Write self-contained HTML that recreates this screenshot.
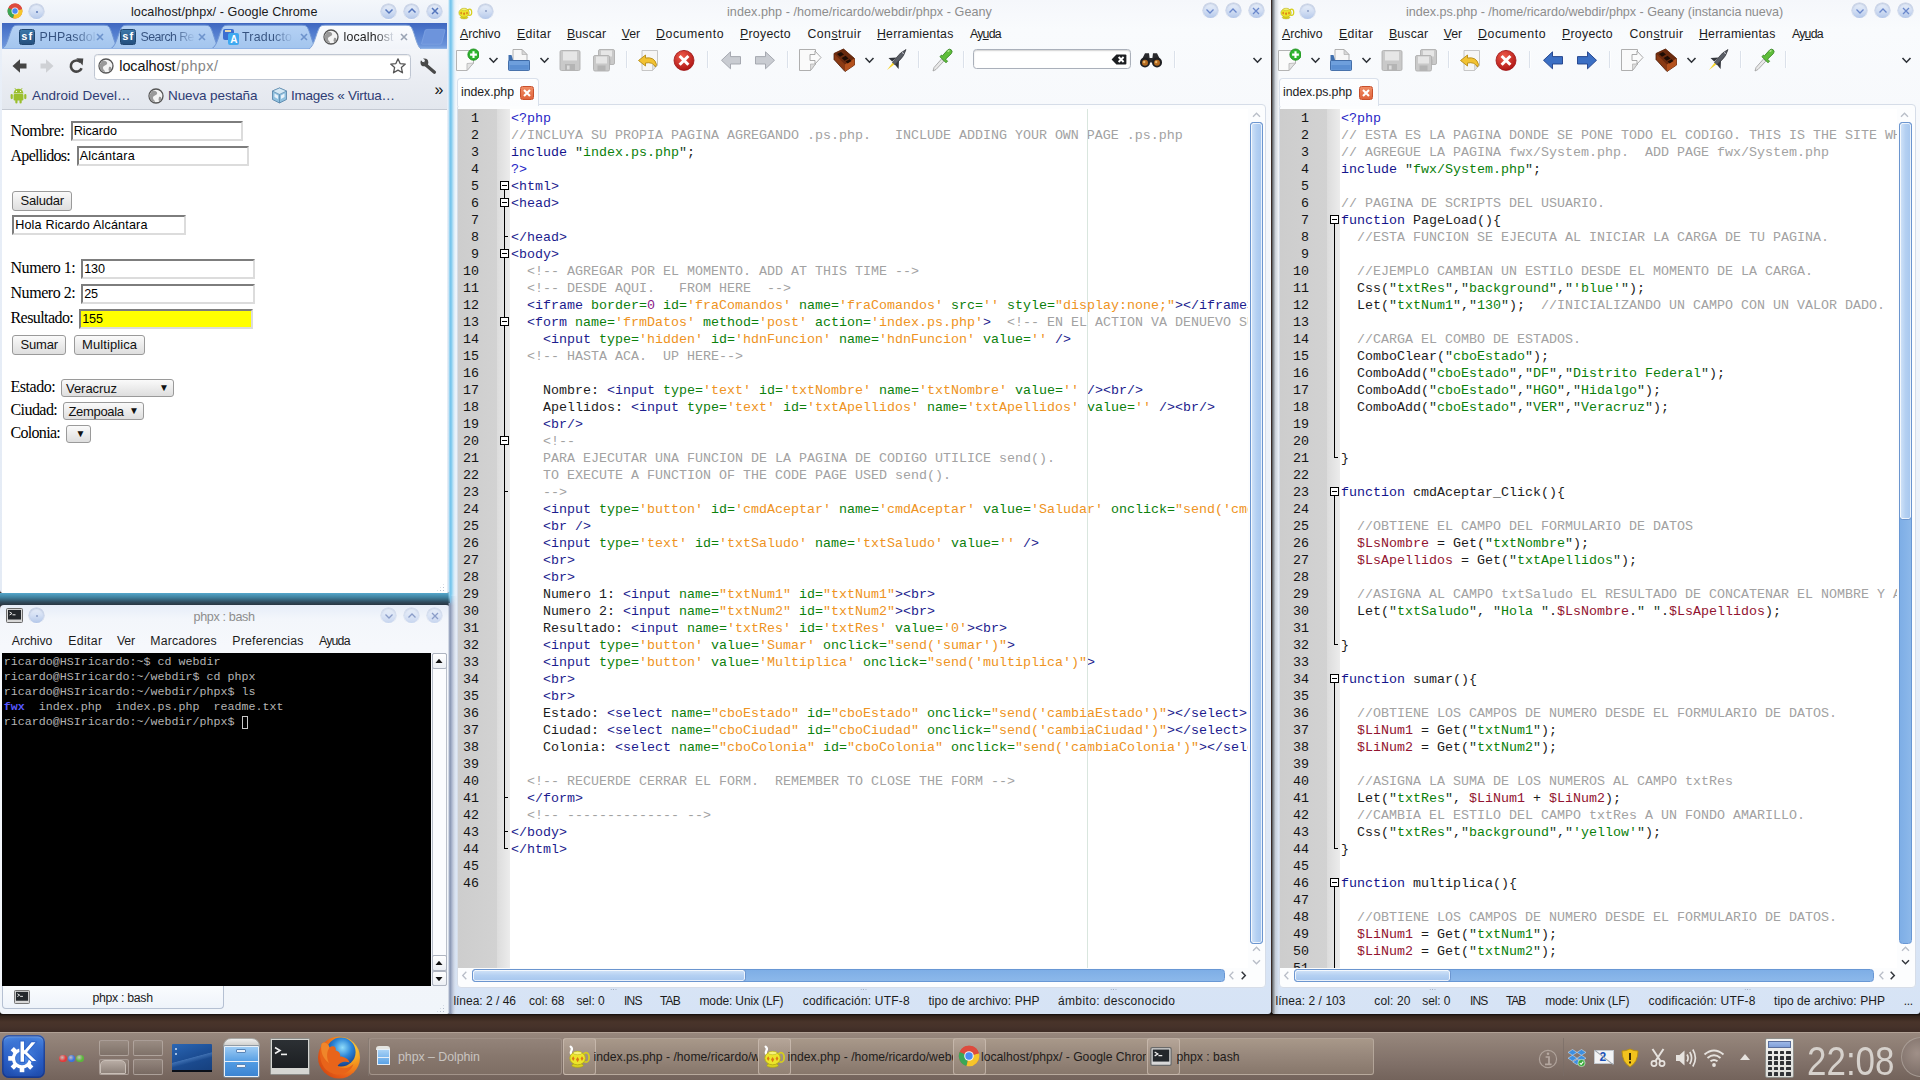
<!DOCTYPE html>
<html><head><meta charset="utf-8"><title>desktop</title>
<style>
*{box-sizing:border-box;margin:0;padding:0}
html,body{width:1920px;height:1080px;overflow:hidden}
body{position:relative;background:#3a2b27;font-family:"Liberation Sans",sans-serif;font-size:13px;color:#1a1a1a}
div,span.t,svg{position:absolute}
span.t{white-space:pre;display:block}
u{text-decoration:underline;text-underline-offset:1px}
.win{background:linear-gradient(#f5f7fb 0px,#f9fbfd 30px,#f7f9fc 110px,#e8eff8 60%,#d6e3f5 100%);overflow:hidden}
.code{font-family:"Liberation Mono",monospace;font-size:13.33px;line-height:17px;white-space:pre;color:#1c1c1c;overflow:hidden}
.code i{font-style:normal}
.code div{position:static;height:17px}
.c{color:#a2a2a2}.p{color:#2626c6}.k{color:#14148c}.s{color:#0b7f0b}.g{color:#1c1c8e}.a{color:#0c800c}.o{color:#ee9322}.v{color:#921430}.q{color:#22402a}.n{color:#8a1a8a}
.ln{font-family:"Liberation Mono",monospace;font-size:13.33px;line-height:17px;color:#141414;text-align:right;white-space:pre}
.ln div{position:static;height:17px}
.wb{border-radius:50%;background:linear-gradient(#e9eff9 0,#d6e1f4 45%,#b4c8ea 100%);box-shadow:0 1px 1px rgba(255,255,255,.95),0 0 0 .6px rgba(150,168,205,.55),inset 0 1px 1.5px rgba(110,130,175,.35)}
.sep{width:1px;background:#d4dbe6;border-right:1px solid #fbfcfe}
.btn{border:1px solid #9a9a9a;border-radius:3px;background:linear-gradient(#fafafa,#dedede);font-size:13px;color:#111;text-align:center;line-height:18px}
.inp{border:2px solid;border-color:#7d7d7d #dcdcdc #dcdcdc #7d7d7d;background:#fff}
.sel{border:1px solid #9a9a9a;border-radius:3px;background:linear-gradient(#fafafa,#dedede)}
.term{font-family:"Liberation Mono",monospace;font-size:11.67px;line-height:15px;white-space:pre;color:#b4b4b4}
.term div{position:static;height:15px}
</style></head><body>
<div style="left:0.0px;top:593.0px;width:452.0px;height:13.0px;background:linear-gradient(#55a7cb 0,#3f7f9c 35%,#2f4a5c 70%,#262e38 100%)"></div>
<div style="left:0.0px;top:1012.0px;width:1920.0px;height:22.0px;background:linear-gradient(#120c0a 0,#120c0a 2px,#33241d 4px,#49342a 10px,#46322a 15px,#3b2a24 100%)"></div>
<div class="win" style="left:0;top:0;width:450px;height:593px;background:linear-gradient(#f4f7fb,#e9eff8 24px,#e4ebf5 100%);border-radius:0 0 3px 3px">
<svg style="left:7px;top:3px" width="16" height="16" viewBox="0 0 16 16">
<circle cx="8" cy="8" r="7.4" fill="#dd4b3e"/>
<path d="M8 8 L1.2 5 A7.4 7.4 0 0 0 6.2 15.2 Z" fill="#3aa757"/>
<path d="M8 8 L6.2 15.2 A7.4 7.4 0 0 0 15.2 6 Z" fill="#f6c52b"/>
<path d="M8 8 L1.6 4.3 A7.4 7.4 0 0 1 15.2 6 Z" fill="#dd4b3e"/>
<circle cx="8" cy="8" r="3.5" fill="#f3f3f3"/><circle cx="8" cy="8" r="2.7" fill="#4a8af4"/></svg>
<div class="wb" style="left:29.0px;top:4.0px;width:15.0px;height:15.0px;"></div>
<div style="left:35.5px;top:10.5px;width:2.0px;height:2.0px;background:#5a78b8;border-radius:50%"></div>
<span class="t" style="left:131.0px;top:4.0px;font-size:12.60px;line-height:16px;color:#1a1a1a;letter-spacing:0.077px;">localhost/phpx/ - Google Chrome</span>
<div class="wb" style="left:381.0px;top:3.5px;width:15.0px;height:15.0px;"></div>
<svg style="left:380.5px;top:3px" width="16" height="16" viewBox="-8 -8 16 16"><path d="M-3.5,-1.5 L0,2 L3.5,-1.5" fill="none" stroke="#5576bd" stroke-width="1.5"/></svg>
<div class="wb" style="left:404.0px;top:3.5px;width:15.0px;height:15.0px;"></div>
<svg style="left:403.5px;top:3px" width="16" height="16" viewBox="-8 -8 16 16"><path d="M-3.5,1.5 L0,-2 L3.5,1.5" fill="none" stroke="#5576bd" stroke-width="1.5"/></svg>
<div class="wb" style="left:427.0px;top:3.5px;width:15.0px;height:15.0px;"></div>
<svg style="left:426.5px;top:3px" width="16" height="16" viewBox="-8 -8 16 16"><path d="M-3,-3 L3,3 M3,-3 L-3,3" fill="none" stroke="#5576bd" stroke-width="1.5"/></svg>
<div style="left:2.0px;top:23.0px;width:445.0px;height:26.0px;background:linear-gradient(#3f66bf 0,#4d78cc 30%,#6a93da 85%,#86ade6 100%)"></div>
<svg style="left:2px;top:23px" width="445" height="26" viewBox="0 0 445 26">
<defs><linearGradient id="tg" x1="0" y1="0" x2="0" y2="1"><stop offset="0" stop-color="#b5d1f4"/><stop offset="1" stop-color="#a3c5ee"/></linearGradient>
<linearGradient id="ta" x1="0" y1="0" x2="0" y2="1"><stop offset="0" stop-color="#fafcfe"/><stop offset="1" stop-color="#f1f4f9"/></linearGradient></defs>
<path d="M0.5 25.5 C6 23 8 5 12 3 Q13 2.2 16 2.2 L102 2.2 Q105 2.2 106 3 C110 5 112 23 117 25.5 Z" fill="url(#tg)" stroke="#6f95d4" stroke-width="1"/>
<path d="M109 25.5 C115 23 117 5 121 3 Q122 2.2 125 2.2 L203 2.2 Q206 2.2 207 3 C211 5 213 23 218 25.5 Z" fill="url(#tg)" stroke="#6f95d4" stroke-width="1"/>
<path d="M210 25.5 C216 23 218 5 222 3 Q223 2.2 226 2.2 L300 2.2 Q303 2.2 304 3 C308 5 310 23 315 25.5 Z" fill="url(#tg)" stroke="#6f95d4" stroke-width="1"/>
<path d="M419.5 20.8 L423 7.6 Q423.4 6.4 424.8 6.4 L441.6 6.4 Q443.4 6.4 443 7.8 L439.6 20 Q439.2 21.2 437.8 21.2 L420.6 21.2 Q419.2 21.2 419.5 20.8 Z" fill="#6d94dc" stroke="#86a9e6" stroke-width="0.6"/>
<rect x="0" y="25" width="445" height="1.2" fill="#8fb3e6"/>
<path d="M307 26 C313 23 315 5 319 3 Q320 2.2 323 2.2 L404 2.2 Q407 2.2 408 3 C412 5 414 23 419 26" fill="url(#ta)" stroke="#86a6d8" stroke-width="1"/>
</svg>
<div style="left:19.0px;top:29.0px;width:16.0px;height:16.0px;background:linear-gradient(#3b77a8,#244f7e);border-radius:2.5px;border:1px solid #1f4670"></div>
<span class="t" style="left:21.2px;top:29.3px;font-size:11.00px;line-height:14px;color:#fff;font-family:'Liberation Sans',sans-serif;font-weight:bold;letter-spacing:1.219px;">sf</span>
<div style="left:120.0px;top:29.0px;width:16.0px;height:16.0px;background:linear-gradient(#3b77a8,#244f7e);border-radius:2.5px;border:1px solid #1f4670"></div>
<span class="t" style="left:122.2px;top:29.3px;font-size:11.00px;line-height:14px;color:#fff;font-family:'Liberation Sans',sans-serif;font-weight:bold;letter-spacing:1.219px;">sf</span>
<div style="left:223.0px;top:29.0px;width:11.0px;height:11.0px;background:#3c6fd0;border-radius:2px"></div>
<div style="left:228.0px;top:33.0px;width:11.0px;height:12.0px;background:#3fa9f0;border-radius:2px"></div>
<span class="t" style="left:230.2px;top:33.0px;font-size:10.00px;line-height:13px;color:#fff;font-family:'Liberation Sans',sans-serif;font-weight:bold;">A</span>
<div style="left:225.0px;top:30.0px;width:6.0px;height:2.0px;background:#e8d9b0"></div>
<span class="t" style="left:39.5px;top:29.0px;font-size:12.40px;line-height:16px;color:#35527f;letter-spacing:0.123px;background:linear-gradient(90deg,#35527f 0,#35527f 62%,rgba(120,150,200,.15) 100%);-webkit-background-clip:text;background-clip:text;color:transparent;">PHPasdol</span>
<span class="t" style="left:140.5px;top:29.0px;font-size:12.40px;line-height:16px;color:#35527f;letter-spacing:-0.573px;background:linear-gradient(90deg,#35527f 0,#35527f 62%,rgba(120,150,200,.15) 100%);-webkit-background-clip:text;background-clip:text;color:transparent;">Search Re</span>
<span class="t" style="left:242.0px;top:29.0px;font-size:12.40px;line-height:16px;color:#35527f;letter-spacing:0.218px;background:linear-gradient(90deg,#35527f 0,#35527f 62%,rgba(120,150,200,.15) 100%);-webkit-background-clip:text;background-clip:text;color:transparent;">Traducto</span>
<span class="t" style="left:343.5px;top:29.0px;font-size:12.40px;line-height:16px;color:#222;letter-spacing:0.132px;background:linear-gradient(90deg,#1d1d1d 0,#1d1d1d 62%,rgba(120,150,200,.15) 100%);-webkit-background-clip:text;background-clip:text;color:transparent;">localhost</span>
<svg style="left:95.0px;top:32px" width="10" height="10" viewBox="-5 -5 10 10"><path d="M-3,-3 L3,3 M3,-3 L-3,3" stroke="#6d93cc" stroke-width="1.6" fill="none"/></svg>
<svg style="left:197.0px;top:32px" width="10" height="10" viewBox="-5 -5 10 10"><path d="M-3,-3 L3,3 M3,-3 L-3,3" stroke="#6d93cc" stroke-width="1.6" fill="none"/></svg>
<svg style="left:298.5px;top:32px" width="10" height="10" viewBox="-5 -5 10 10"><path d="M-3,-3 L3,3 M3,-3 L-3,3" stroke="#6d93cc" stroke-width="1.6" fill="none"/></svg>
<svg style="left:399.0px;top:32px" width="10" height="10" viewBox="-5 -5 10 10"><path d="M-3,-3 L3,3 M3,-3 L-3,3" stroke="#9aa4b4" stroke-width="1.6" fill="none"/></svg>
<svg style="left:323.0px;top:29.0px" width="16" height="16" viewBox="-8 -8 16 16"><circle r="7" fill="#f4f4f4" stroke="#555" stroke-width="1.3"/><path d="M-4,-5 C-1,-6 2,-4 1,-2 C0,0 -3,-1 -3,2 C-3,4 -1,4 -1,6 C-4,6 -7,3 -6.5,-1 Z M3,1 C5,0 6,2 5,4 C4,5.5 2.5,5 2.5,3.5 Z" fill="#9a9a9a"/></svg>
<div style="left:2.0px;top:49.0px;width:445.0px;height:33.0px;background:linear-gradient(#f3f5f9,#e9ecf2)"></div>
<svg style="left:10px;top:56px" width="80" height="20" viewBox="0 0 80 20">
<path d="M2.5 10 L10 3.2 L10 7.6 L16.5 7.6 L16.5 12.4 L10 12.4 L10 16.8 Z" fill="#454545"/>
<path d="M43.5 10 L36 3.2 L36 7.6 L30.5 7.6 L30.5 12.4 L36 12.4 L36 16.8 Z" fill="#cfd1d5"/>
<path d="M70.5 6.2 A5.6 5.6 0 1 0 71.6 12.2" fill="none" stroke="#454545" stroke-width="2.6"/>
<path d="M66.3 2.2 L73.3 2.6 L72.6 9.4 Z" fill="#454545"/></svg>
<div style="left:94.0px;top:54.0px;width:317.0px;height:25.5px;background:#fff;border:1px solid #bfc6d2;border-radius:3.5px;box-shadow:inset 0 1px 1px rgba(0,0,0,.08)"></div>
<svg style="left:98.0px;top:58.0px" width="16" height="16" viewBox="-8 -8 16 16"><circle r="7" fill="#f4f4f4" stroke="#555" stroke-width="1.3"/><path d="M-4,-5 C-1,-6 2,-4 1,-2 C0,0 -3,-1 -3,2 C-3,4 -1,4 -1,6 C-4,6 -7,3 -6.5,-1 Z M3,1 C5,0 6,2 5,4 C4,5.5 2.5,5 2.5,3.5 Z" fill="#9a9a9a"/></svg>
<span class="t" style="left:119.3px;top:57.0px;font-size:14.40px;line-height:19px;color:#111;letter-spacing:-0.067px;">localhost</span>
<span class="t" style="left:176.5px;top:57.0px;font-size:14.40px;line-height:19px;color:#868686;letter-spacing:0.454px;">/phpx/</span>
<svg style="left:389px;top:57px" width="18" height="18" viewBox="-9 -9 18 18"><path d="M0,-7.2 L2.1,-2.4 L7.3,-1.9 L3.4,1.6 L4.5,6.8 L0,4.1 L-4.5,6.8 L-3.4,1.6 L-7.3,-1.9 L-2.1,-2.4 Z" fill="#fdfdfd" stroke="#555" stroke-width="1.3" stroke-linejoin="round"/></svg>
<svg style="left:419px;top:56px" width="20" height="20" viewBox="0 0 20 20"><path d="M5.2 7.6 L15.4 16.2" stroke="#494949" stroke-width="3.3" stroke-linecap="round"/><circle cx="5.4" cy="6.4" r="3.9" fill="#494949"/><path d="M5.4 6.4 L0.6 3.6 L3.4 0.2 Z" fill="#eff2f7"/><circle cx="4.3" cy="4.6" r="1.5" fill="#eff2f7"/></svg>
<div style="left:2.0px;top:82.0px;width:445.0px;height:28.0px;background:linear-gradient(#e9ecf2,#e3e7ee);border-bottom:1px solid #c4c9d2"></div>
<svg style="left:10px;top:87px" width="17" height="17" viewBox="0 0 17 17"><g fill="#9bbf2d">
<path d="M3.6 6.4 A4.9 4.6 0 0 1 13.4 6.4 Z"/><rect x="3.6" y="7" width="9.8" height="6.6" rx="1"/>
<rect x="0.6" y="7" width="2.2" height="5.2" rx="1.1"/><rect x="14.2" y="7" width="2.2" height="5.2" rx="1.1"/>
<rect x="5.3" y="12.5" width="2.2" height="4" rx="1.1"/><rect x="9.5" y="12.5" width="2.2" height="4" rx="1.1"/>
<path d="M4.8 1 L6.2 3.2 M12.2 1 L10.8 3.2" stroke="#9bbf2d" stroke-width="0.8"/></g>
<circle cx="6.4" cy="4.4" r=".6" fill="#fff"/><circle cx="10.6" cy="4.4" r=".6" fill="#fff"/></svg>
<span class="t" style="left:32.0px;top:86.5px;font-size:13.50px;line-height:18px;color:#2e3c74;letter-spacing:0.015px;">Android Devel…</span>
<svg style="left:147.6px;top:87.5px" width="16" height="16" viewBox="-8 -8 16 16"><circle r="7" fill="#f4f4f4" stroke="#555" stroke-width="1.3"/><path d="M-4,-5 C-1,-6 2,-4 1,-2 C0,0 -3,-1 -3,2 C-3,4 -1,4 -1,6 C-4,6 -7,3 -6.5,-1 Z M3,1 C5,0 6,2 5,4 C4,5.5 2.5,5 2.5,3.5 Z" fill="#9a9a9a"/></svg>
<span class="t" style="left:168.0px;top:86.5px;font-size:13.50px;line-height:18px;color:#2e3c74;letter-spacing:-0.110px;">Nueva pestaña</span>
<svg style="left:271px;top:87px" width="17" height="17" viewBox="0 0 17 17">
<path d="M8.5 1 L15.5 4 L15.5 12.5 L8.5 16 L1.5 12.5 L1.5 4 Z" fill="#8fc0de" stroke="#4f7fa6" stroke-width=".8"/>
<path d="M8.5 1 L15.5 4 L8.5 7.4 L1.5 4 Z" fill="#d4e8f4" stroke="#4f7fa6" stroke-width=".6"/>
<path d="M8.5 7.4 L8.5 16" stroke="#4f7fa6" stroke-width=".7"/><path d="M3.5 6.5 L7 8.5 L7 12 L3.5 10 Z M10 8.5 L13.5 6.5 L13.5 10 L10 12 Z" fill="#e8f2fa"/></svg>
<span class="t" style="left:291.0px;top:86.5px;font-size:13.50px;line-height:18px;color:#2e3c74;letter-spacing:-0.254px;">Images « Virtua…</span>
<span class="t" style="left:434.5px;top:79.0px;font-size:16.00px;line-height:21px;color:#111;">»</span>
<div style="left:2.0px;top:110.0px;width:445.0px;height:483.0px;background:#fff"></div>
<span class="t" style="left:10.5px;top:119.7px;font-size:16.00px;line-height:21px;color:#000;font-family:'Liberation Serif',serif;letter-spacing:-0.429px;">Nombre:</span>
<div class="inp" style="left:70.5px;top:121.0px;width:172.5px;height:20.0px;background:#fff"></div>
<span class="t" style="left:73.7px;top:123.3px;font-size:12.60px;line-height:16px;color:#000;letter-spacing:-0.020px;">Ricardo</span>
<span class="t" style="left:10.5px;top:144.7px;font-size:16.00px;line-height:21px;color:#000;font-family:'Liberation Serif',serif;letter-spacing:-0.707px;">Apellidos:</span>
<div class="inp" style="left:76.5px;top:146.0px;width:172.5px;height:20.0px;background:#fff"></div>
<span class="t" style="left:79.7px;top:148.3px;font-size:12.60px;line-height:16px;color:#000;letter-spacing:0.221px;">Alcántara</span>
<div class="btn" style="left:12.0px;top:190.5px;width:60.0px;height:20.0px;"></div>
<span class="t" style="left:20.5px;top:192.3px;font-size:13.00px;line-height:17px;color:#111;letter-spacing:-0.218px;">Saludar</span>
<div class="inp" style="left:12.0px;top:215.0px;width:173.5px;height:20.0px;background:#fff"></div>
<span class="t" style="left:15.2px;top:217.3px;font-size:12.60px;line-height:16px;color:#000;letter-spacing:0.163px;">Hola Ricardo Alcántara</span>
<span class="t" style="left:10.5px;top:257.2px;font-size:16.00px;line-height:21px;color:#000;font-family:'Liberation Serif',serif;letter-spacing:-0.447px;">Numero 1:</span>
<div class="inp" style="left:81.0px;top:259.0px;width:173.5px;height:20.0px;background:#fff"></div>
<span class="t" style="left:84.2px;top:261.3px;font-size:12.60px;line-height:16px;color:#000;letter-spacing:-0.158px;">130</span>
<span class="t" style="left:10.5px;top:282.2px;font-size:16.00px;line-height:21px;color:#000;font-family:'Liberation Serif',serif;letter-spacing:-0.447px;">Numero 2:</span>
<div class="inp" style="left:81.0px;top:284.0px;width:173.5px;height:20.0px;background:#fff"></div>
<span class="t" style="left:84.2px;top:286.3px;font-size:12.60px;line-height:16px;color:#000;letter-spacing:-0.210px;">25</span>
<span class="t" style="left:10.5px;top:307.2px;font-size:16.00px;line-height:21px;color:#000;font-family:'Liberation Serif',serif;letter-spacing:-0.571px;">Resultado:</span>
<div class="inp" style="left:79.0px;top:309.0px;width:173.5px;height:20.0px;background:#ffff00"></div>
<span class="t" style="left:82.2px;top:311.3px;font-size:12.60px;line-height:16px;color:#000;letter-spacing:-0.158px;">155</span>
<div class="btn" style="left:12.0px;top:334.5px;width:54.0px;height:20.0px;"></div>
<span class="t" style="left:20.5px;top:336.3px;font-size:13.00px;line-height:17px;color:#111;letter-spacing:-0.198px;">Sumar</span>
<div class="btn" style="left:74.0px;top:334.5px;width:71.0px;height:20.0px;"></div>
<span class="t" style="left:82.0px;top:336.3px;font-size:13.00px;line-height:17px;color:#111;letter-spacing:0.090px;">Multiplica</span>
<span class="t" style="left:10.5px;top:375.7px;font-size:16.00px;line-height:21px;color:#000;font-family:'Liberation Serif',serif;letter-spacing:-0.449px;">Estado:</span>
<div class="sel" style="left:61.0px;top:378.5px;width:113.0px;height:18.5px;"></div>
<span class="t" style="left:66.0px;top:379.5px;font-size:13.00px;line-height:17px;color:#111;letter-spacing:-0.043px;">Veracruz</span>
<span class="t" style="left:159.0px;top:381.0px;font-size:10.00px;line-height:13px;color:#111;">▼</span>
<span class="t" style="left:10.5px;top:398.7px;font-size:16.00px;line-height:21px;color:#000;font-family:'Liberation Serif',serif;letter-spacing:-0.561px;">Ciudad:</span>
<div class="sel" style="left:63.0px;top:401.5px;width:81.0px;height:18.5px;"></div>
<span class="t" style="left:68.5px;top:402.5px;font-size:13.00px;line-height:17px;color:#111;letter-spacing:-0.330px;">Zempoala</span>
<span class="t" style="left:129.0px;top:404.0px;font-size:10.00px;line-height:13px;color:#111;">▼</span>
<span class="t" style="left:10.5px;top:421.7px;font-size:16.00px;line-height:21px;color:#000;font-family:'Liberation Serif',serif;letter-spacing:-0.687px;">Colonia:</span>
<div class="sel" style="left:66.0px;top:424.5px;width:25.0px;height:18.5px;"></div>
<span class="t" style="left:75.5px;top:427.0px;font-size:10.00px;line-height:13px;color:#111;">▼</span>
<div style="left:436.0px;top:583.0px;width:9.0px;height:9.0px;background:radial-gradient(circle,#9aa4b8 0.8px,transparent 1px) 0 0/3px 3px;opacity:.7;clip-path:polygon(100% 0,100% 100%,0 100%)"></div>
</div>
<div class="win" style="left:0;top:605px;width:450px;height:409px;background:linear-gradient(#e6edf8 0,#f3f6fb 14px,#f6f8fc 40px,#f1f5fa 100%);border-radius:4px 4px 3px 3px">
<svg style="left:6.0px;top:3.0px" width="17" height="15" viewBox="0 0 17 15"><rect x=".5" y=".5" width="16" height="14" rx="1" fill="#d8d8d8" stroke="#6a6a6a"/><rect x="2" y="2" width="13" height="9.5" fill="#23272b"/><path d="M3.5 4 L6 5.5 L3.5 7" fill="none" stroke="#eee" stroke-width="1"/><rect x="6.5" y="6.3" width="3" height="1" fill="#eee"/></svg>
<div class="wb" style="left:29.0px;top:3.0px;width:15.0px;height:15.0px;"></div>
<div style="left:35.5px;top:9.5px;width:2.0px;height:2.0px;background:#8a9cc4;border-radius:50%"></div>
<span class="t" style="left:193.5px;top:4.0px;font-size:12.60px;line-height:16px;color:#8d8d8d;letter-spacing:-0.365px;">phpx : bash</span>
<div class="wb" style="left:381.0px;top:3.0px;width:15.0px;height:15.0px;opacity:.7"></div>
<svg style="left:380.5px;top:2.5px" width="16" height="16" viewBox="-8 -8 16 16"><path d="M-3.5,-1.5 L0,2 L3.5,-1.5" fill="none" stroke="#8b9dc8" stroke-width="1.3"/></svg>
<div class="wb" style="left:404.0px;top:3.0px;width:15.0px;height:15.0px;opacity:.7"></div>
<svg style="left:403.5px;top:2.5px" width="16" height="16" viewBox="-8 -8 16 16"><path d="M-3.5,1.5 L0,-2 L3.5,1.5" fill="none" stroke="#8b9dc8" stroke-width="1.3"/></svg>
<div class="wb" style="left:427.0px;top:3.0px;width:15.0px;height:15.0px;opacity:.7"></div>
<svg style="left:426.5px;top:2.5px" width="16" height="16" viewBox="-8 -8 16 16"><path d="M-3,-3 L3,3 M3,-3 L-3,3" fill="none" stroke="#8b9dc8" stroke-width="1.3"/></svg>
<span class="t" style="left:11.8px;top:27.8px;font-size:12.30px;line-height:16px;color:#1c1c1c;letter-spacing:-0.086px;">Archivo</span>
<span class="t" style="left:68.3px;top:27.8px;font-size:12.30px;line-height:16px;color:#1c1c1c;letter-spacing:0.313px;">Editar</span>
<span class="t" style="left:117.0px;top:27.8px;font-size:12.30px;line-height:16px;color:#1c1c1c;letter-spacing:-0.232px;">Ver</span>
<span class="t" style="left:150.3px;top:27.8px;font-size:12.30px;line-height:16px;color:#1c1c1c;letter-spacing:0.151px;">Marcadores</span>
<span class="t" style="left:232.3px;top:27.8px;font-size:12.30px;line-height:16px;color:#1c1c1c;letter-spacing:0.195px;">Preferencias</span>
<span class="t" style="left:319.0px;top:27.8px;font-size:12.30px;line-height:16px;color:#1c1c1c;letter-spacing:-0.789px;">Ayuda</span>
<div style="left:2.0px;top:48.0px;width:429.0px;height:333.0px;background:#000"></div>
<div class="term" style="left:3.7px;top:50px;width:426px;height:330px"><div>ricardo@HSIricardo:~$ cd webdir</div><div>ricardo@HSIricardo:~/webdir$ cd phpx</div><div>ricardo@HSIricardo:~/webdir/phpx$ ls</div><div><b style="color:#5858ff">fwx</b>  index.php  index.ps.php  readme.txt</div><div>ricardo@HSIricardo:~/webdir/phpx$ </div></div>
<div style="left:241.5px;top:110.5px;width:6.5px;height:13.5px;border:1px solid #c8c8c8"></div>
<div style="left:431.5px;top:48.0px;width:15.0px;height:333.0px;background:#fbfcfe;border:1px solid #b9bfca;border-radius:2px"></div>
<div style="left:431.5px;top:48.0px;width:15.0px;height:15.5px;background:linear-gradient(#ffffff,#eceff4);border:1px solid #aeb4c0;border-radius:2px"></div>
<svg style="left:433px;top:51.0px" width="12" height="10" viewBox="-6 -5 12 10"><path d="M-3.5,2 L0,-2.2 L3.5,2 Z" fill="#111"/></svg>
<div style="left:431.5px;top:350.0px;width:15.0px;height:15.5px;background:linear-gradient(#ffffff,#eceff4);border:1px solid #aeb4c0;border-radius:2px"></div>
<svg style="left:433px;top:353.0px" width="12" height="10" viewBox="-6 -5 12 10"><path d="M-3.5,2 L0,-2.2 L3.5,2 Z" fill="#111"/></svg>
<div style="left:431.5px;top:365.5px;width:15.0px;height:15.5px;background:linear-gradient(#ffffff,#eceff4);border:1px solid #aeb4c0;border-radius:2px"></div>
<svg style="left:433px;top:368.5px" width="12" height="10" viewBox="-6 -5 12 10"><path d="M-3.5,-2 L0,2.2 L3.5,-2 Z" fill="#111"/></svg>
<div style="left:2.0px;top:381.0px;width:222.0px;height:23.0px;background:linear-gradient(#fafcfe,#eef3fa);border:1px solid #b5c0d2;border-top:none;border-radius:0 0 4px 4px"></div>
<svg style="left:14.0px;top:385.0px" width="16" height="14" viewBox="0 0 17 15"><rect x=".5" y=".5" width="16" height="14" rx="1" fill="#d8d8d8" stroke="#6a6a6a"/><rect x="2" y="2" width="13" height="9.5" fill="#23272b"/><path d="M3.5 4 L6 5.5 L3.5 7" fill="none" stroke="#eee" stroke-width="1"/><rect x="6.5" y="6.3" width="3" height="1" fill="#eee"/></svg>
<span class="t" style="left:92.5px;top:385.0px;font-size:12.30px;line-height:16px;color:#1c1c1c;letter-spacing:-0.310px;">phpx : bash</span>
<div style="left:436.0px;top:399.0px;width:9.0px;height:9.0px;background:radial-gradient(circle,#9aa4b8 0.8px,transparent 1px) 0 0/3px 3px;opacity:.7;clip-path:polygon(100% 0,100% 100%,0 100%)"></div>
</div>
<div class="win" style="left:450.0px;top:0;width:820.5px;height:1014px;border-radius:0 0 3px 3px">
<div style="left:0.0px;top:596.0px;width:8.0px;height:418.0px;background:linear-gradient(90deg,#8d9ab6 0,#a3afc8 1.5px,#c3ccdd 3.2px,rgba(214,222,235,.6) 5px,rgba(236,241,248,0) 7px)"></div>
<div style="left:0.0px;top:0.0px;width:8.0px;height:606.0px;background:linear-gradient(90deg,#74c3ec 0,#86cdef 1.5px,#bfe2f6 3.2px,rgba(226,240,250,.6) 5px,rgba(240,246,252,0) 7px);-webkit-mask-image:linear-gradient(#000 0,#000 594px,transparent 606px);mask-image:linear-gradient(#000 0,#000 594px,transparent 606px)"></div>
<svg style="left:6.5px;top:3.5px" width="16" height="16" viewBox="0 0 24 24">
<path d="M3.6 1.6 Q6 3.4 4.2 6 Q3 8 5.2 9.8" fill="none" stroke="#fdfdfd" stroke-width="2.2" stroke-linecap="round"/>
<ellipse cx="19" cy="12.4" rx="3.1" ry="4.8" fill="none" stroke="#d6cf1c" stroke-width="1.8"/>
<ellipse cx="10.6" cy="20.4" rx="5.8" ry="2" fill="#d9d21e" stroke="#a8a012" stroke-width=".6"/>
<ellipse cx="10.6" cy="13.2" rx="7.8" ry="6.6" fill="#ece52c" stroke="#b0a814" stroke-width=".8"/>
<ellipse cx="10.6" cy="8" rx="4.4" ry="1.7" fill="#f6f27a" stroke="#b0a814" stroke-width=".5"/>
<path d="M6.2 11.2 L7.6 13.6 L6.2 16 L4.8 13.6 Z M10.6 12 L12.2 14.6 L10.6 17.2 L9 14.6 Z M15 11.2 L16.4 13.6 L15 16 L13.6 13.6 Z" fill="#dd7a16"/>
</svg>
<div class="wb" style="left:28.0px;top:3.5px;width:15.0px;height:15.0px;"></div>
<div style="left:34.5px;top:10.0px;width:2.0px;height:2.0px;background:#8a9cc4;border-radius:50%"></div>
<span class="t" style="left:277.0px;top:4.0px;font-size:12.60px;line-height:16px;color:#8d8d8d;letter-spacing:0.054px;">index.php - /home/ricardo/webdir/phpx - Geany</span>
<div class="wb" style="left:752.5px;top:3.0px;width:15.0px;height:15.0px;"></div>
<svg style="left:752.0px;top:2.5px" width="16" height="16" viewBox="-8 -8 16 16"><path d="M-3.5,-1.5 L0,2 L3.5,-1.5" fill="none" stroke="#6a88cc" stroke-width="1.3"/></svg>
<div class="wb" style="left:775.5px;top:3.0px;width:15.0px;height:15.0px;"></div>
<svg style="left:775.0px;top:2.5px" width="16" height="16" viewBox="-8 -8 16 16"><path d="M-3.5,1.5 L0,-2 L3.5,1.5" fill="none" stroke="#6a88cc" stroke-width="1.3"/></svg>
<div class="wb" style="left:798.5px;top:3.0px;width:15.0px;height:15.0px;"></div>
<svg style="left:798.0px;top:2.5px" width="16" height="16" viewBox="-8 -8 16 16"><path d="M-3,-3 L3,3 M3,-3 L-3,3" fill="none" stroke="#6a88cc" stroke-width="1.3"/></svg>
<span class="t" style="left:10.0px;top:26.3px;font-size:12.30px;line-height:16px;color:#1c1c1c;letter-spacing:-0.086px;"><u>A</u>rchivo</span>
<span class="t" style="left:67.0px;top:26.3px;font-size:12.30px;line-height:16px;color:#1c1c1c;letter-spacing:0.373px;"><u>E</u>ditar</span>
<span class="t" style="left:117.0px;top:26.3px;font-size:12.30px;line-height:16px;color:#1c1c1c;letter-spacing:0.143px;"><u>B</u>uscar</span>
<span class="t" style="left:171.7px;top:26.3px;font-size:12.30px;line-height:16px;color:#1c1c1c;letter-spacing:-0.082px;"><u>V</u>er</span>
<span class="t" style="left:206.0px;top:26.3px;font-size:12.30px;line-height:16px;color:#1c1c1c;letter-spacing:0.575px;"><u>D</u>ocumento</span>
<span class="t" style="left:290.0px;top:26.3px;font-size:12.30px;line-height:16px;color:#1c1c1c;letter-spacing:0.280px;"><u>P</u>royecto</span>
<span class="t" style="left:357.5px;top:26.3px;font-size:12.30px;line-height:16px;color:#1c1c1c;letter-spacing:0.450px;">Con<u>s</u>truir</span>
<span class="t" style="left:427.0px;top:26.3px;font-size:12.30px;line-height:16px;color:#1c1c1c;letter-spacing:0.225px;"><u>H</u>erramientas</span>
<span class="t" style="left:520.0px;top:26.3px;font-size:12.30px;line-height:16px;color:#1c1c1c;letter-spacing:-0.789px;">Ay<u>u</u>da</span>
<svg style="left:4.5px;top:48.0px" width="24" height="24" viewBox="0 0 24 24"><g transform="translate(-2,0)"><path d="M3.5 2.5 L20.5 2.5 L20.5 15 L14 22.5 L3.5 22.5 Z" fill="#fbfbfb" stroke="#b4b4b4" stroke-width="1"/><path d="M20.5 15 L14 15.5 L14 22.5 Z" fill="#e4e4e4" stroke="#b4b4b4" stroke-width=".8"/></g><circle cx="18.5" cy="6.6" r="5.6" fill="#2fb52f" stroke="#148a14" stroke-width=".9"/><path d="M18.5 3.2 V10 M15.1 6.6 H21.9" stroke="#fff" stroke-width="2.1"/></svg>
<svg style="left:38.1px;top:56px" width="11" height="8" viewBox="-5.5 -4 11 8"><path d="M-4,-2 L0,2.2 L4,-2" fill="none" stroke="#2e3238" stroke-width="1.6"/></svg>
<svg style="left:57.0px;top:48.0px" width="24" height="24" viewBox="0 0 24 24"><path d="M6 1.5 L15 1.5 L20 6.5 L20 13 L6 13 Z" fill="#f7f7f7" stroke="#a8a8a8" stroke-width=".9"/><path d="M15 1.5 L15 6.5 L20 6.5 Z" fill="#d8d8d8" stroke="#a8a8a8" stroke-width=".6"/><path d="M1.5 7 L4.5 7 L6 12 L22.5 12 L22.5 22 L1.5 22 Z" fill="#3f6fae"/><rect x="1.5" y="12.5" width="21" height="10" rx="1" fill="#6e9fdc" stroke="#3c68a4" stroke-width=".9"/><rect x="2.5" y="17" width="19" height="4.6" fill="#5b8fd2"/></svg>
<svg style="left:88.9px;top:56px" width="11" height="8" viewBox="-5.5 -4 11 8"><path d="M-4,-2 L0,2.2 L4,-2" fill="none" stroke="#2e3238" stroke-width="1.6"/></svg>
<svg style="left:108.0px;top:48.0px" width="24" height="24" viewBox="0 0 24 24"><rect x="2" y="2.5" width="20" height="20" rx="1.5" fill="#c9c9c9" stroke="#b0b0b0" stroke-width=".9"/><rect x="5" y="3.5" width="14" height="9" fill="#e6e6e6"/><rect x="7" y="16" width="10" height="6.5" fill="#b4b4b4"/><rect x="9" y="17.5" width="2.6" height="4" fill="#dcdcdc"/></svg>
<svg style="left:142.0px;top:48.0px" width="24" height="24" viewBox="0 0 24 24"><rect x="6.5" y="1.5" width="16" height="15" rx="1.5" fill="#c9c9c9" stroke="#b0b0b0" stroke-width=".9"/><rect x="9" y="2.5" width="11" height="6" fill="#e6e6e6"/><rect x="10.5" y="11.5" width="8" height="5" fill="#b4b4b4"/><rect x="1.5" y="7.5" width="16" height="15.5" rx="1.5" fill="#c9c9c9" stroke="#b0b0b0" stroke-width=".9"/><rect x="4" y="8.5" width="11" height="7" fill="#e6e6e6"/><rect x="5.5" y="17.5" width="8" height="5.5" fill="#b4b4b4"/></svg>
<div style="left:176.3px;top:51.0px;width:2.0px;height:17.0px;background:linear-gradient(90deg,#dbe1ea 50%,#fdfeff 50%)"></div>
<svg style="left:187.0px;top:48.0px" width="24" height="24" viewBox="0 0 24 24"><path d="M5 2.5 L20.5 2.5 L20.5 17 L15.5 22.5 L5 22.5 Z" fill="#f6f6f6" stroke="#c0c0c0" stroke-width=".9"/><path d="M20.5 17 L15.5 17 L15.5 22.5 Z" fill="#e0e0e0" stroke="#c0c0c0" stroke-width=".6"/><path d="M1.5 12.5 L8.5 7 L8.5 10 Q17.5 8.5 19.5 16.5 L18.5 19 Q15.5 13.5 8.5 15 L8.5 18 Z" fill="#f2c232" stroke="#b58a14" stroke-width=".9" stroke-linejoin="round"/></svg>
<svg style="left:222.0px;top:48.0px" width="24" height="24" viewBox="0 0 24 24"><defs><radialGradient id="rg820" cx=".4" cy=".3" r=".8"><stop offset="0" stop-color="#ee5a4a"/><stop offset="1" stop-color="#a80e0e"/></radialGradient></defs><circle cx="12" cy="12.4" r="10" fill="url(#rg820)" stroke="#9a1010" stroke-width=".8"/><path d="M7.6 8 L16.4 16.8 M16.4 8 L7.6 16.8" stroke="#fff" stroke-width="3"/></svg>
<div style="left:256.5px;top:51.0px;width:2.0px;height:17.0px;background:linear-gradient(90deg,#dbe1ea 50%,#fdfeff 50%)"></div>
<svg style="left:268.5px;top:48.0px" width="24" height="24" viewBox="0 0 24 24"><path d="M2.5 12.3 L11.5 3.8 L11.5 8.6 L21.5 8.6 L21.5 16 L11.5 16 L11.5 20.8 Z" fill="#c9ccd2" stroke="#9fa3aa" stroke-width=".9" stroke-linejoin="round"/></svg>
<svg style="left:302.5px;top:48.0px" width="24" height="24" viewBox="0 0 24 24"><path d="M21.5 12.3 L12.5 3.8 L12.5 8.6 L2.5 8.6 L2.5 16 L12.5 16 L12.5 20.8 Z" fill="#c9ccd2" stroke="#9fa3aa" stroke-width=".9" stroke-linejoin="round"/></svg>
<div style="left:336.9px;top:51.0px;width:2.0px;height:17.0px;background:linear-gradient(90deg,#dbe1ea 50%,#fdfeff 50%)"></div>
<svg style="left:348.0px;top:48.0px" width="24" height="24" viewBox="0 0 24 24"><path d="M1.5 1.5 L17.5 1.5 L17.5 16 L12.5 22.5 L1.5 22.5 Z" fill="#fafafa" stroke="#a6a6a6" stroke-width=".9"/><path d="M17.5 16 L12.5 16 L12.5 22.5 Z" fill="#dcdcdc" stroke="#a6a6a6" stroke-width=".6"/><path d="M12 6.5 L17 6.5 L17 3 L23 9.5 L17 16 L17 12.5 L12 12.5 Z" fill="#fbfbfb" stroke="#a0a0a0" stroke-width=".9" stroke-linejoin="round"/></svg>
<svg style="left:382.0px;top:48.0px" width="24" height="24" viewBox="0 0 24 24"><path d="M2 5.5 L11.5 1 L22.5 10.5 L22.5 17 L13 23.5 L2 11.5 Z" fill="#8a3a14" stroke="#4a1c08" stroke-width=".8"/><path d="M2 5.5 L11.5 1 L22.5 10.5 L13 16.5 Z" fill="#6a2a0e"/><path d="M13 16.5 L22.5 10.5 L22.5 17 L13 23.5 Z" fill="#b4521e"/><path d="M5 6 L9 4 L12 6.6 L8 8.8 Z M9.6 10 L13.6 7.8 L16.6 10.4 L12.6 12.8 Z M13.5 13.6 L17.5 11.3 L19.5 13 L15.6 15.4 Z" fill="#1e0c04"/></svg>
<svg style="left:413.9px;top:56px" width="11" height="8" viewBox="-5.5 -4 11 8"><path d="M-4,-2 L0,2.2 L4,-2" fill="none" stroke="#2e3238" stroke-width="1.6"/></svg>
<svg style="left:433.5px;top:48.0px" width="24" height="24" viewBox="0 0 24 24"><path d="M22 1.5 Q16 4.5 12.5 9.5 L8.5 14.5 L10.5 16.5 L15.5 12.5 Q20 8.5 22 1.5 Z" fill="#5a5e66" stroke="#2c2e33" stroke-width=".7"/><path d="M12.5 9.5 L4.5 10 L8.2 13.6 Z M15 12.4 L14.6 21 L10.8 16.4 Z" fill="#33363c"/><path d="M8.6 14.8 L10.2 16.4 L3 22 Z" fill="#f6d42a"/><path d="M18 4.5 Q19.5 4.5 19.5 6" fill="none" stroke="#c9ccd2" stroke-width=".9"/></svg>
<div style="left:468.1px;top:51.0px;width:2.0px;height:17.0px;background:linear-gradient(90deg,#dbe1ea 50%,#fdfeff 50%)"></div>
<svg style="left:479.6px;top:48.0px" width="24" height="24" viewBox="0 0 24 24"><path d="M3 23 L4 19.5 L11.5 11 L13.8 13.2 L6 21.5 Z" fill="#e8e8e8" stroke="#9c9c9c" stroke-width=".8"/><path d="M10 8.8 L16 14.8 L17.6 13.2 L15.6 11.2 L21.4 5.6 Q23 3.4 21.2 1.8 Q19.4 0.4 17.6 2 L12.4 7.8 L11.4 7 Z" fill="#5fbd3a" stroke="#2f7f1c" stroke-width=".8" stroke-linejoin="round"/><path d="M17.6 3.6 L19.4 2.4" stroke="#c6f0a6" stroke-width="1.2"/></svg>
<div style="left:513.1px;top:51.0px;width:2.0px;height:17.0px;background:linear-gradient(90deg,#dbe1ea 50%,#fdfeff 50%)"></div>
<div style="left:523.0px;top:48.8px;width:158.0px;height:20.6px;background:#fff;border:1px solid #aab0ba;border-radius:3.5px;box-shadow:inset 0 1px 1.5px rgba(0,0,0,.18)"></div>
<svg style="left:661px;top:54.3px" width="16" height="11" viewBox="0 0 16 11"><path d="M0.6 5.5 L5.4 0.6 L14.4 0.6 Q15.4 0.6 15.4 1.6 L15.4 9.4 Q15.4 10.4 14.4 10.4 L5.4 10.4 Z" fill="#1d1f22"/><path d="M7.6 3 L12.6 8 M12.6 3 L7.6 8" stroke="#fff" stroke-width="1.9"/></svg>
<svg style="left:689px;top:52px" width="24" height="16" viewBox="0 0 24 16">
<path d="M6 1.2 L10 1.2 L10.6 6 L13.4 6 L14 1.2 L18 1.2 L22.6 10.5 L1.4 10.5 Z" fill="#2a2b2e"/>
<circle cx="6" cy="10.4" r="5" fill="#1e1f22"/><circle cx="18" cy="10.4" r="5" fill="#1e1f22"/>
<circle cx="6" cy="10.8" r="3" fill="#b46a1e"/><circle cx="18" cy="10.8" r="3" fill="#b46a1e"/>
<circle cx="5.2" cy="10" r="1.2" fill="#e8b870"/><circle cx="17.2" cy="10" r="1.2" fill="#e8b870"/></svg>
<div style="left:723.8px;top:51.0px;width:2.0px;height:17.0px;background:linear-gradient(90deg,#dbe1ea 50%,#fdfeff 50%)"></div>
<svg style="left:801.5px;top:56px" width="11" height="8" viewBox="-5.5 -4 11 8"><path d="M-4,-2 L0,2.2 L4,-2" fill="none" stroke="#2e3238" stroke-width="1.6"/></svg>
<div style="left:7.0px;top:104.0px;width:809.0px;height:883.5px;border:1px solid #d6dde8;border-radius:4px;background:#fcfdfe"></div>
<div style="left:7.0px;top:78.3px;width:82.0px;height:27.7px;border:1px solid #d9e0eb;border-bottom:none;border-radius:4px 4px 0 0;background:linear-gradient(#fdfeff,#fbfcfe)"></div>
<span class="t" style="left:11.0px;top:84.3px;font-size:12.30px;line-height:16px;color:#1c1c1c;letter-spacing:-0.043px;">index.php</span>
<div style="left:69.5px;top:85.5px;width:14.0px;height:14.0px;background:linear-gradient(#f08c64,#e0643c);border:1px solid #c8502c;border-radius:2.5px"></div>
<svg style="left:69.5px;top:85.5px" width="14" height="14" viewBox="-7 -7 14 14"><path d="M-3,-3 L3,3 M3,-3 L-3,3" stroke="#fff" stroke-width="2.1" fill="none"/></svg>
<div style="left:8.0px;top:109.0px;width:790.0px;height:859.0px;background:#fff"></div>
<div style="left:8.0px;top:109.0px;width:39.0px;height:859.0px;background:linear-gradient(90deg,#cdcdcd,#d2d2d2)"></div>
<div style="left:47.0px;top:109.0px;width:13.0px;height:859.0px;background:linear-gradient(90deg,#dcdcdc,#ececec)"></div>
<div class="ln" style="left:8px;top:110px;width:21px;height:858px;overflow:hidden"><div>1</div><div>2</div><div>3</div><div>4</div><div>5</div><div>6</div><div>7</div><div>8</div><div>9</div><div>10</div><div>11</div><div>12</div><div>13</div><div>14</div><div>15</div><div>16</div><div>17</div><div>18</div><div>19</div><div>20</div><div>21</div><div>22</div><div>23</div><div>24</div><div>25</div><div>26</div><div>27</div><div>28</div><div>29</div><div>30</div><div>31</div><div>32</div><div>33</div><div>34</div><div>35</div><div>36</div><div>37</div><div>38</div><div>39</div><div>40</div><div>41</div><div>42</div><div>43</div><div>44</div><div>45</div><div>46</div></div>
<div style="left:53.9px;top:185.0px;width:1.0px;height:664.0px;background:#000"></div>
<div style="left:54.4px;top:848.0px;width:4.0px;height:1.0px;background:#000"></div>
<div style="left:54.4px;top:236.0px;width:4.0px;height:1.0px;background:#000"></div>
<div style="left:54.4px;top:491.0px;width:4.0px;height:1.0px;background:#000"></div>
<div style="left:54.4px;top:797.0px;width:4.0px;height:1.0px;background:#000"></div>
<div style="left:54.4px;top:831.0px;width:4.0px;height:1.0px;background:#000"></div>
<div style="left:49.9px;top:181.0px;width:9.0px;height:9.0px;background:#fff;border:1px solid #000"></div>
<div style="left:51.9px;top:185.0px;width:5.0px;height:1.0px;background:#000"></div>
<div style="left:49.9px;top:198.0px;width:9.0px;height:9.0px;background:#fff;border:1px solid #000"></div>
<div style="left:51.9px;top:202.0px;width:5.0px;height:1.0px;background:#000"></div>
<div style="left:49.9px;top:249.0px;width:9.0px;height:9.0px;background:#fff;border:1px solid #000"></div>
<div style="left:51.9px;top:253.0px;width:5.0px;height:1.0px;background:#000"></div>
<div style="left:49.9px;top:317.0px;width:9.0px;height:9.0px;background:#fff;border:1px solid #000"></div>
<div style="left:51.9px;top:321.0px;width:5.0px;height:1.0px;background:#000"></div>
<div style="left:49.9px;top:436.0px;width:9.0px;height:9.0px;background:#fff;border:1px solid #000"></div>
<div style="left:51.9px;top:440.0px;width:5.0px;height:1.0px;background:#000"></div>
<div class="code" style="left:61px;top:110px;width:737px;height:858px"><div><i class="p">&lt;?php</i></div><div><i class="c">//INCLUYA SU PROPIA PAGINA AGREGANDO .ps.php.   INCLUDE ADDING YOUR OWN PAGE .ps.php</i></div><div><i class="k">include</i> <i class="q">"</i><i class="s">index.ps.php</i><i class="q">"</i>;</div><div><i class="p">?&gt;</i></div><div><i class="g">&lt;html</i><i class="g">&gt;</i></div><div><i class="g">&lt;head</i><i class="g">&gt;</i></div><div></div><div><i class="g">&lt;/head</i><i class="g">&gt;</i></div><div><i class="g">&lt;body</i><i class="g">&gt;</i></div><div>  <i class="c">&lt;!-- AGREGAR POR EL MOMENTO. ADD AT THIS TIME --&gt;</i></div><div>  <i class="c">&lt;!-- DESDE AQUI.   FROM HERE  --&gt;</i></div><div>  <i class="g">&lt;iframe</i> <i class="a">border=</i><i class="n">0</i> <i class="a">id=</i><i class="o">'fraComandos'</i> <i class="a">name=</i><i class="o">'fraComandos'</i> <i class="a">src=</i><i class="o">''</i> <i class="a">style=</i><i class="o">"display:none;"</i><i class="g">&gt;</i><i class="g">&lt;/iframe</i><i class="g">&gt;</i></div><div>  <i class="g">&lt;form</i> <i class="a">name=</i><i class="o">'frmDatos'</i> <i class="a">method=</i><i class="o">'post'</i> <i class="a">action=</i><i class="o">'index.ps.php'</i><i class="g">&gt;</i>  <i class="c">&lt;!-- EN EL ACTION VA DENUEVO SU PAGINA --&gt;</i></div><div>    <i class="g">&lt;input</i> <i class="a">type=</i><i class="o">'hidden'</i> <i class="a">id=</i><i class="o">'hdnFuncion'</i> <i class="a">name=</i><i class="o">'hdnFuncion'</i> <i class="a">value=</i><i class="o">''</i> <i class="g">/</i><i class="g">&gt;</i></div><div>  <i class="c">&lt;!-- HASTA ACA.  UP HERE--&gt;</i></div><div></div><div>    Nombre: <i class="g">&lt;input</i> <i class="a">type=</i><i class="o">'text'</i> <i class="a">id=</i><i class="o">'txtNombre'</i> <i class="a">name=</i><i class="o">'txtNombre'</i> <i class="a">value=</i><i class="o">''</i> <i class="g">/</i><i class="g">&gt;</i><i class="g">&lt;br</i><i class="g">/</i><i class="g">&gt;</i></div><div>    Apellidos: <i class="g">&lt;input</i> <i class="a">type=</i><i class="o">'text'</i> <i class="a">id=</i><i class="o">'txtApellidos'</i> <i class="a">name=</i><i class="o">'txtApellidos'</i> <i class="a">value=</i><i class="o">''</i> <i class="g">/</i><i class="g">&gt;</i><i class="g">&lt;br</i><i class="g">/</i><i class="g">&gt;</i></div><div>    <i class="g">&lt;br</i><i class="g">/</i><i class="g">&gt;</i></div><div>    <i class="c">&lt;!--</i></div><div><i class="c">    PARA EJECUTAR UNA FUNCION DE LA PAGINA DE CODIGO UTILICE send().</i></div><div><i class="c">    TO EXECUTE A FUNCTION OF THE CODE PAGE USED send().</i></div><div><i class="c">    --&gt;</i></div><div>    <i class="g">&lt;input</i> <i class="a">type=</i><i class="o">'button'</i> <i class="a">id=</i><i class="o">'cmdAceptar'</i> <i class="a">name=</i><i class="o">'cmdAceptar'</i> <i class="a">value=</i><i class="o">'Saludar'</i> <i class="a">onclick=</i><i class="o">"send('cmdAceptar_Click')"</i><i class="g">&gt;</i></div><div>    <i class="g">&lt;br</i> <i class="g">/</i><i class="g">&gt;</i></div><div>    <i class="g">&lt;input</i> <i class="a">type=</i><i class="o">'text'</i> <i class="a">id=</i><i class="o">'txtSaludo'</i> <i class="a">name=</i><i class="o">'txtSaludo'</i> <i class="a">value=</i><i class="o">''</i> <i class="g">/</i><i class="g">&gt;</i></div><div>    <i class="g">&lt;br</i><i class="g">&gt;</i></div><div>    <i class="g">&lt;br</i><i class="g">&gt;</i></div><div>    Numero 1: <i class="g">&lt;input</i> <i class="a">name=</i><i class="o">"txtNum1"</i> <i class="a">id=</i><i class="o">"txtNum1"</i><i class="g">&gt;</i><i class="g">&lt;br</i><i class="g">&gt;</i></div><div>    Numero 2: <i class="g">&lt;input</i> <i class="a">name=</i><i class="o">"txtNum2"</i> <i class="a">id=</i><i class="o">"txtNum2"</i><i class="g">&gt;</i><i class="g">&lt;br</i><i class="g">&gt;</i></div><div>    Resultado: <i class="g">&lt;input</i> <i class="a">name=</i><i class="o">'txtRes'</i> <i class="a">id=</i><i class="o">'txtRes'</i> <i class="a">value=</i><i class="o">'0'</i><i class="g">&gt;</i><i class="g">&lt;br</i><i class="g">&gt;</i></div><div>    <i class="g">&lt;input</i> <i class="a">type=</i><i class="o">'button'</i> <i class="a">value=</i><i class="o">'Sumar'</i> <i class="a">onclick=</i><i class="o">"send('sumar')"</i><i class="g">&gt;</i></div><div>    <i class="g">&lt;input</i> <i class="a">type=</i><i class="o">'button'</i> <i class="a">value=</i><i class="o">'Multiplica'</i> <i class="a">onclick=</i><i class="o">"send('multiplica')"</i><i class="g">&gt;</i></div><div>    <i class="g">&lt;br</i><i class="g">&gt;</i></div><div>    <i class="g">&lt;br</i><i class="g">&gt;</i></div><div>    Estado: <i class="g">&lt;select</i> <i class="a">name=</i><i class="o">"cboEstado"</i> <i class="a">id=</i><i class="o">"cboEstado"</i> <i class="a">onclick=</i><i class="o">"send('cambiaEstado')"</i><i class="g">&gt;</i><i class="g">&lt;/select</i><i class="g">&gt;</i></div><div>    Ciudad: <i class="g">&lt;select</i> <i class="a">name=</i><i class="o">"cboCiudad"</i> <i class="a">id=</i><i class="o">"cboCiudad"</i> <i class="a">onclick=</i><i class="o">"send('cambiaCiudad')"</i><i class="g">&gt;</i><i class="g">&lt;/select</i><i class="g">&gt;</i></div><div>    Colonia: <i class="g">&lt;select</i> <i class="a">name=</i><i class="o">"cboColonia"</i> <i class="a">id=</i><i class="o">"cboColonia"</i> <i class="a">onclick=</i><i class="o">"send('cambiaColonia')"</i><i class="g">&gt;</i><i class="g">&lt;/select</i><i class="g">&gt;</i></div><div></div><div>  <i class="c">&lt;!-- RECUERDE CERRAR EL FORM.  REMEMBER TO CLOSE THE FORM --&gt;</i></div><div>  <i class="g">&lt;/form</i><i class="g">&gt;</i></div><div>  <i class="c">&lt;!-- -------------- --&gt;</i></div><div><i class="g">&lt;/body</i><i class="g">&gt;</i></div><div><i class="g">&lt;/html</i><i class="g">&gt;</i></div><div></div><div></div></div>
<div style="left:637.0px;top:109.0px;width:1.0px;height:859.0px;background:#d9e6de"></div>
<svg style="left:799.5px;top:111px" width="13" height="8" viewBox="-6.5 -4 13 8"><path d="M-3.5,1.8 L0,-1.8 L3.5,1.8" fill="none" stroke="#b9bec8" stroke-width="1.3"/></svg>
<div style="left:800.0px;top:122.0px;width:13.0px;height:822.0px;background:linear-gradient(90deg,#7eaee6,#8cb8ea);border:1px solid #6897d4;border-radius:3.5px"></div>
<div style="left:800.0px;top:122.0px;width:13.0px;height:822.0px;background:linear-gradient(90deg,#d3e4f8,#b4d0f2 50%,#a6c6ee);border:1px solid #6b95cf;border-radius:3.5px;box-shadow:inset 0 0 0 1px rgba(255,255,255,.75)"></div>
<svg style="left:800.0px;top:945px" width="13" height="8" viewBox="-6.5 -4 13 8"><path d="M-3.5,1.8 L0,-1.8 L3.5,1.8" fill="none" stroke="#b9bec8" stroke-width="1.3"/></svg>
<svg style="left:800.0px;top:958px" width="13" height="8" viewBox="-6.5 -4 13 8"><path d="M-3.5,-1.8 L0,1.8 L3.5,-1.8" fill="none" stroke="#b9bec8" stroke-width="1.4"/></svg>
<svg style="left:10px;top:969px" width="9" height="13" viewBox="-4.5 -6.5 9 13"><path d="M1.8,-3.8 L-1.8,0 L1.8,3.8" fill="none" stroke="#b9bec8" stroke-width="1.3"/></svg>
<div style="left:22.0px;top:969.0px;width:752.5px;height:12.5px;background:linear-gradient(#7eaee6,#8cb8ea);border:1px solid #6897d4;border-radius:3.5px"></div>
<div style="left:22.0px;top:969.0px;width:273.6px;height:12.5px;background:linear-gradient(#d3e4f8,#b4d0f2 50%,#a6c6ee);border:1px solid #6b95cf;border-radius:3.5px;box-shadow:inset 0 0 0 1px rgba(255,255,255,.75)"></div>
<svg style="left:777.0px;top:969px" width="9" height="13" viewBox="-4.5 -6.5 9 13"><path d="M1.8,-3.8 L-1.8,0 L1.8,3.8" fill="none" stroke="#b9bec8" stroke-width="1.3"/></svg>
<svg style="left:788.5px;top:969px" width="9" height="13" viewBox="-4.5 -6.5 9 13"><path d="M-1.8,-3.8 L1.8,0 L-1.8,3.8" fill="none" stroke="#33363c" stroke-width="1.5"/></svg>
<div style="left:160.0px;top:988.5px;width:7.0px;height:1.2px;background:radial-gradient(circle,#9aa6ba .6px,transparent .8px) 0 0/2.4px 1.2px"></div>
<div style="left:410.0px;top:988.5px;width:7.0px;height:1.2px;background:radial-gradient(circle,#9aa6ba .6px,transparent .8px) 0 0/2.4px 1.2px"></div>
<div style="left:660.0px;top:988.5px;width:7.0px;height:1.2px;background:radial-gradient(circle,#9aa6ba .6px,transparent .8px) 0 0/2.4px 1.2px"></div>
<span class="t" style="left:3.4px;top:993.2px;font-size:12.00px;line-height:16px;color:#1c1c1c;letter-spacing:-0.009px;">línea: 2 / 46</span>
<span class="t" style="left:79.0px;top:993.2px;font-size:12.00px;line-height:16px;color:#1c1c1c;letter-spacing:0.024px;">col: 68</span>
<span class="t" style="left:126.4px;top:993.2px;font-size:12.00px;line-height:16px;color:#1c1c1c;letter-spacing:-0.096px;">sel: 0</span>
<span class="t" style="left:173.9px;top:993.2px;font-size:12.00px;line-height:16px;color:#1c1c1c;letter-spacing:-0.652px;">INS</span>
<span class="t" style="left:210.0px;top:993.2px;font-size:12.00px;line-height:16px;color:#1c1c1c;letter-spacing:-0.874px;">TAB</span>
<span class="t" style="left:249.5px;top:993.2px;font-size:12.00px;line-height:16px;color:#1c1c1c;letter-spacing:-0.137px;">mode: Unix (LF)</span>
<span class="t" style="left:352.8px;top:993.2px;font-size:12.00px;line-height:16px;color:#1c1c1c;letter-spacing:0.191px;">codificación: UTF-8</span>
<span class="t" style="left:478.4px;top:993.2px;font-size:12.00px;line-height:16px;color:#1c1c1c;letter-spacing:0.090px;">tipo de archivo: PHP</span>
<span class="t" style="left:607.9px;top:993.2px;font-size:12.00px;line-height:16px;color:#1c1c1c;letter-spacing:0.385px;">ámbito: desconocido</span>
</div>
<div class="win" style="left:1272.0px;top:0;width:648.0px;height:1014px;border-radius:0 0 3px 3px">
<div style="left:0.0px;top:0.0px;width:7.0px;height:1014.0px;background:linear-gradient(90deg,#4f5256 0,#8d9298 1.5px,rgba(190,196,205,.7) 3.5px,rgba(235,240,246,0) 7px)"></div>
<svg style="left:6.5px;top:3.5px" width="16" height="16" viewBox="0 0 24 24">
<path d="M3.6 1.6 Q6 3.4 4.2 6 Q3 8 5.2 9.8" fill="none" stroke="#fdfdfd" stroke-width="2.2" stroke-linecap="round"/>
<ellipse cx="19" cy="12.4" rx="3.1" ry="4.8" fill="none" stroke="#d6cf1c" stroke-width="1.8"/>
<ellipse cx="10.6" cy="20.4" rx="5.8" ry="2" fill="#d9d21e" stroke="#a8a012" stroke-width=".6"/>
<ellipse cx="10.6" cy="13.2" rx="7.8" ry="6.6" fill="#ece52c" stroke="#b0a814" stroke-width=".8"/>
<ellipse cx="10.6" cy="8" rx="4.4" ry="1.7" fill="#f6f27a" stroke="#b0a814" stroke-width=".5"/>
<path d="M6.2 11.2 L7.6 13.6 L6.2 16 L4.8 13.6 Z M10.6 12 L12.2 14.6 L10.6 17.2 L9 14.6 Z M15 11.2 L16.4 13.6 L15 16 L13.6 13.6 Z" fill="#dd7a16"/>
</svg>
<div class="wb" style="left:28.0px;top:3.5px;width:15.0px;height:15.0px;"></div>
<div style="left:34.5px;top:10.0px;width:2.0px;height:2.0px;background:#8a9cc4;border-radius:50%"></div>
<span class="t" style="left:134.0px;top:4.0px;font-size:12.60px;line-height:16px;color:#8d8d8d;letter-spacing:-0.022px;">index.ps.php - /home/ricardo/webdir/phpx - Geany (instancia nueva)</span>
<div class="wb" style="left:580.0px;top:3.0px;width:15.0px;height:15.0px;"></div>
<svg style="left:579.5px;top:2.5px" width="16" height="16" viewBox="-8 -8 16 16"><path d="M-3.5,-1.5 L0,2 L3.5,-1.5" fill="none" stroke="#6a88cc" stroke-width="1.3"/></svg>
<div class="wb" style="left:603.0px;top:3.0px;width:15.0px;height:15.0px;"></div>
<svg style="left:602.5px;top:2.5px" width="16" height="16" viewBox="-8 -8 16 16"><path d="M-3.5,1.5 L0,-2 L3.5,1.5" fill="none" stroke="#6a88cc" stroke-width="1.3"/></svg>
<div class="wb" style="left:626.0px;top:3.0px;width:15.0px;height:15.0px;"></div>
<svg style="left:625.5px;top:2.5px" width="16" height="16" viewBox="-8 -8 16 16"><path d="M-3,-3 L3,3 M3,-3 L-3,3" fill="none" stroke="#6a88cc" stroke-width="1.3"/></svg>
<span class="t" style="left:10.0px;top:26.3px;font-size:12.30px;line-height:16px;color:#1c1c1c;letter-spacing:-0.086px;"><u>A</u>rchivo</span>
<span class="t" style="left:67.0px;top:26.3px;font-size:12.30px;line-height:16px;color:#1c1c1c;letter-spacing:0.373px;"><u>E</u>ditar</span>
<span class="t" style="left:117.0px;top:26.3px;font-size:12.30px;line-height:16px;color:#1c1c1c;letter-spacing:0.143px;"><u>B</u>uscar</span>
<span class="t" style="left:171.7px;top:26.3px;font-size:12.30px;line-height:16px;color:#1c1c1c;letter-spacing:-0.082px;"><u>V</u>er</span>
<span class="t" style="left:206.0px;top:26.3px;font-size:12.30px;line-height:16px;color:#1c1c1c;letter-spacing:0.575px;"><u>D</u>ocumento</span>
<span class="t" style="left:290.0px;top:26.3px;font-size:12.30px;line-height:16px;color:#1c1c1c;letter-spacing:0.280px;"><u>P</u>royecto</span>
<span class="t" style="left:357.5px;top:26.3px;font-size:12.30px;line-height:16px;color:#1c1c1c;letter-spacing:0.450px;">Con<u>s</u>truir</span>
<span class="t" style="left:427.0px;top:26.3px;font-size:12.30px;line-height:16px;color:#1c1c1c;letter-spacing:0.225px;"><u>H</u>erramientas</span>
<span class="t" style="left:520.0px;top:26.3px;font-size:12.30px;line-height:16px;color:#1c1c1c;letter-spacing:-0.789px;">Ay<u>u</u>da</span>
<svg style="left:4.5px;top:48.0px" width="24" height="24" viewBox="0 0 24 24"><g transform="translate(-2,0)"><path d="M3.5 2.5 L20.5 2.5 L20.5 15 L14 22.5 L3.5 22.5 Z" fill="#fbfbfb" stroke="#b4b4b4" stroke-width="1"/><path d="M20.5 15 L14 15.5 L14 22.5 Z" fill="#e4e4e4" stroke="#b4b4b4" stroke-width=".8"/></g><circle cx="18.5" cy="6.6" r="5.6" fill="#2fb52f" stroke="#148a14" stroke-width=".9"/><path d="M18.5 3.2 V10 M15.1 6.6 H21.9" stroke="#fff" stroke-width="2.1"/></svg>
<svg style="left:38.1px;top:56px" width="11" height="8" viewBox="-5.5 -4 11 8"><path d="M-4,-2 L0,2.2 L4,-2" fill="none" stroke="#2e3238" stroke-width="1.6"/></svg>
<svg style="left:57.0px;top:48.0px" width="24" height="24" viewBox="0 0 24 24"><path d="M6 1.5 L15 1.5 L20 6.5 L20 13 L6 13 Z" fill="#f7f7f7" stroke="#a8a8a8" stroke-width=".9"/><path d="M15 1.5 L15 6.5 L20 6.5 Z" fill="#d8d8d8" stroke="#a8a8a8" stroke-width=".6"/><path d="M1.5 7 L4.5 7 L6 12 L22.5 12 L22.5 22 L1.5 22 Z" fill="#3f6fae"/><rect x="1.5" y="12.5" width="21" height="10" rx="1" fill="#6e9fdc" stroke="#3c68a4" stroke-width=".9"/><rect x="2.5" y="17" width="19" height="4.6" fill="#5b8fd2"/></svg>
<svg style="left:88.9px;top:56px" width="11" height="8" viewBox="-5.5 -4 11 8"><path d="M-4,-2 L0,2.2 L4,-2" fill="none" stroke="#2e3238" stroke-width="1.6"/></svg>
<svg style="left:108.0px;top:48.0px" width="24" height="24" viewBox="0 0 24 24"><rect x="2" y="2.5" width="20" height="20" rx="1.5" fill="#c9c9c9" stroke="#b0b0b0" stroke-width=".9"/><rect x="5" y="3.5" width="14" height="9" fill="#e6e6e6"/><rect x="7" y="16" width="10" height="6.5" fill="#b4b4b4"/><rect x="9" y="17.5" width="2.6" height="4" fill="#dcdcdc"/></svg>
<svg style="left:142.0px;top:48.0px" width="24" height="24" viewBox="0 0 24 24"><rect x="6.5" y="1.5" width="16" height="15" rx="1.5" fill="#c9c9c9" stroke="#b0b0b0" stroke-width=".9"/><rect x="9" y="2.5" width="11" height="6" fill="#e6e6e6"/><rect x="10.5" y="11.5" width="8" height="5" fill="#b4b4b4"/><rect x="1.5" y="7.5" width="16" height="15.5" rx="1.5" fill="#c9c9c9" stroke="#b0b0b0" stroke-width=".9"/><rect x="4" y="8.5" width="11" height="7" fill="#e6e6e6"/><rect x="5.5" y="17.5" width="8" height="5.5" fill="#b4b4b4"/></svg>
<div style="left:176.3px;top:51.0px;width:2.0px;height:17.0px;background:linear-gradient(90deg,#dbe1ea 50%,#fdfeff 50%)"></div>
<svg style="left:187.0px;top:48.0px" width="24" height="24" viewBox="0 0 24 24"><path d="M5 2.5 L20.5 2.5 L20.5 17 L15.5 22.5 L5 22.5 Z" fill="#f6f6f6" stroke="#c0c0c0" stroke-width=".9"/><path d="M20.5 17 L15.5 17 L15.5 22.5 Z" fill="#e0e0e0" stroke="#c0c0c0" stroke-width=".6"/><path d="M1.5 12.5 L8.5 7 L8.5 10 Q17.5 8.5 19.5 16.5 L18.5 19 Q15.5 13.5 8.5 15 L8.5 18 Z" fill="#f2c232" stroke="#b58a14" stroke-width=".9" stroke-linejoin="round"/></svg>
<svg style="left:222.0px;top:48.0px" width="24" height="24" viewBox="0 0 24 24"><defs><radialGradient id="rg648" cx=".4" cy=".3" r=".8"><stop offset="0" stop-color="#ee5a4a"/><stop offset="1" stop-color="#a80e0e"/></radialGradient></defs><circle cx="12" cy="12.4" r="10" fill="url(#rg648)" stroke="#9a1010" stroke-width=".8"/><path d="M7.6 8 L16.4 16.8 M16.4 8 L7.6 16.8" stroke="#fff" stroke-width="3"/></svg>
<div style="left:256.5px;top:51.0px;width:2.0px;height:17.0px;background:linear-gradient(90deg,#dbe1ea 50%,#fdfeff 50%)"></div>
<svg style="left:268.5px;top:48.0px" width="24" height="24" viewBox="0 0 24 24"><path d="M2.5 12.3 L11.5 3.8 L11.5 8.6 L21.5 8.6 L21.5 16 L11.5 16 L11.5 20.8 Z" fill="#3b6fc4" stroke="#1e3e88" stroke-width=".9" stroke-linejoin="round"/></svg>
<svg style="left:302.5px;top:48.0px" width="24" height="24" viewBox="0 0 24 24"><path d="M21.5 12.3 L12.5 3.8 L12.5 8.6 L2.5 8.6 L2.5 16 L12.5 16 L12.5 20.8 Z" fill="#3b6fc4" stroke="#1e3e88" stroke-width=".9" stroke-linejoin="round"/></svg>
<div style="left:336.9px;top:51.0px;width:2.0px;height:17.0px;background:linear-gradient(90deg,#dbe1ea 50%,#fdfeff 50%)"></div>
<svg style="left:348.0px;top:48.0px" width="24" height="24" viewBox="0 0 24 24"><path d="M1.5 1.5 L17.5 1.5 L17.5 16 L12.5 22.5 L1.5 22.5 Z" fill="#fafafa" stroke="#a6a6a6" stroke-width=".9"/><path d="M17.5 16 L12.5 16 L12.5 22.5 Z" fill="#dcdcdc" stroke="#a6a6a6" stroke-width=".6"/><path d="M12 6.5 L17 6.5 L17 3 L23 9.5 L17 16 L17 12.5 L12 12.5 Z" fill="#fbfbfb" stroke="#a0a0a0" stroke-width=".9" stroke-linejoin="round"/></svg>
<svg style="left:382.0px;top:48.0px" width="24" height="24" viewBox="0 0 24 24"><path d="M2 5.5 L11.5 1 L22.5 10.5 L22.5 17 L13 23.5 L2 11.5 Z" fill="#8a3a14" stroke="#4a1c08" stroke-width=".8"/><path d="M2 5.5 L11.5 1 L22.5 10.5 L13 16.5 Z" fill="#6a2a0e"/><path d="M13 16.5 L22.5 10.5 L22.5 17 L13 23.5 Z" fill="#b4521e"/><path d="M5 6 L9 4 L12 6.6 L8 8.8 Z M9.6 10 L13.6 7.8 L16.6 10.4 L12.6 12.8 Z M13.5 13.6 L17.5 11.3 L19.5 13 L15.6 15.4 Z" fill="#1e0c04"/></svg>
<svg style="left:413.9px;top:56px" width="11" height="8" viewBox="-5.5 -4 11 8"><path d="M-4,-2 L0,2.2 L4,-2" fill="none" stroke="#2e3238" stroke-width="1.6"/></svg>
<svg style="left:433.5px;top:48.0px" width="24" height="24" viewBox="0 0 24 24"><path d="M22 1.5 Q16 4.5 12.5 9.5 L8.5 14.5 L10.5 16.5 L15.5 12.5 Q20 8.5 22 1.5 Z" fill="#5a5e66" stroke="#2c2e33" stroke-width=".7"/><path d="M12.5 9.5 L4.5 10 L8.2 13.6 Z M15 12.4 L14.6 21 L10.8 16.4 Z" fill="#33363c"/><path d="M8.6 14.8 L10.2 16.4 L3 22 Z" fill="#f6d42a"/><path d="M18 4.5 Q19.5 4.5 19.5 6" fill="none" stroke="#c9ccd2" stroke-width=".9"/></svg>
<div style="left:468.1px;top:51.0px;width:2.0px;height:17.0px;background:linear-gradient(90deg,#dbe1ea 50%,#fdfeff 50%)"></div>
<svg style="left:479.6px;top:48.0px" width="24" height="24" viewBox="0 0 24 24"><path d="M3 23 L4 19.5 L11.5 11 L13.8 13.2 L6 21.5 Z" fill="#e8e8e8" stroke="#9c9c9c" stroke-width=".8"/><path d="M10 8.8 L16 14.8 L17.6 13.2 L15.6 11.2 L21.4 5.6 Q23 3.4 21.2 1.8 Q19.4 0.4 17.6 2 L12.4 7.8 L11.4 7 Z" fill="#5fbd3a" stroke="#2f7f1c" stroke-width=".8" stroke-linejoin="round"/><path d="M17.6 3.6 L19.4 2.4" stroke="#c6f0a6" stroke-width="1.2"/></svg>
<div style="left:513.1px;top:51.0px;width:2.0px;height:17.0px;background:linear-gradient(90deg,#dbe1ea 50%,#fdfeff 50%)"></div>
<svg style="left:629.0px;top:56px" width="11" height="8" viewBox="-5.5 -4 11 8"><path d="M-4,-2 L0,2.2 L4,-2" fill="none" stroke="#2e3238" stroke-width="1.6"/></svg>
<div style="left:7.0px;top:104.0px;width:636.5px;height:883.5px;border:1px solid #d6dde8;border-radius:4px;background:#fcfdfe"></div>
<div style="left:7.0px;top:78.3px;width:99.5px;height:27.7px;border:1px solid #d9e0eb;border-bottom:none;border-radius:4px 4px 0 0;background:linear-gradient(#fdfeff,#fbfcfe)"></div>
<span class="t" style="left:11.0px;top:84.3px;font-size:12.30px;line-height:16px;color:#1c1c1c;letter-spacing:-0.068px;">index.ps.php</span>
<div style="left:87.0px;top:85.5px;width:14.0px;height:14.0px;background:linear-gradient(#f08c64,#e0643c);border:1px solid #c8502c;border-radius:2.5px"></div>
<svg style="left:87.0px;top:85.5px" width="14" height="14" viewBox="-7 -7 14 14"><path d="M-3,-3 L3,3 M3,-3 L-3,3" stroke="#fff" stroke-width="2.1" fill="none"/></svg>
<div style="left:8.0px;top:109.0px;width:617.0px;height:859.0px;background:#fff"></div>
<div style="left:8.0px;top:109.0px;width:47.0px;height:859.0px;background:linear-gradient(90deg,#cdcdcd,#d2d2d2)"></div>
<div style="left:55.0px;top:109.0px;width:13.0px;height:859.0px;background:linear-gradient(90deg,#dcdcdc,#ececec)"></div>
<div class="ln" style="left:8px;top:110px;width:29px;height:858px;overflow:hidden"><div>1</div><div>2</div><div>3</div><div>4</div><div>5</div><div>6</div><div>7</div><div>8</div><div>9</div><div>10</div><div>11</div><div>12</div><div>13</div><div>14</div><div>15</div><div>16</div><div>17</div><div>18</div><div>19</div><div>20</div><div>21</div><div>22</div><div>23</div><div>24</div><div>25</div><div>26</div><div>27</div><div>28</div><div>29</div><div>30</div><div>31</div><div>32</div><div>33</div><div>34</div><div>35</div><div>36</div><div>37</div><div>38</div><div>39</div><div>40</div><div>41</div><div>42</div><div>43</div><div>44</div><div>45</div><div>46</div><div>47</div><div>48</div><div>49</div><div>50</div><div>51</div></div>
<div style="left:61.9px;top:219.0px;width:1.0px;height:239.0px;background:#000"></div>
<div style="left:62.4px;top:457.0px;width:4.0px;height:1.0px;background:#000"></div>
<div style="left:61.9px;top:491.0px;width:1.0px;height:154.0px;background:#000"></div>
<div style="left:62.4px;top:644.0px;width:4.0px;height:1.0px;background:#000"></div>
<div style="left:61.9px;top:678.0px;width:1.0px;height:171.0px;background:#000"></div>
<div style="left:62.4px;top:848.0px;width:4.0px;height:1.0px;background:#000"></div>
<div style="left:61.9px;top:882.0px;width:1.0px;height:86.0px;background:#000"></div>
<div style="left:57.9px;top:215.0px;width:9.0px;height:9.0px;background:#fff;border:1px solid #000"></div>
<div style="left:59.9px;top:219.0px;width:5.0px;height:1.0px;background:#000"></div>
<div style="left:57.9px;top:487.0px;width:9.0px;height:9.0px;background:#fff;border:1px solid #000"></div>
<div style="left:59.9px;top:491.0px;width:5.0px;height:1.0px;background:#000"></div>
<div style="left:57.9px;top:674.0px;width:9.0px;height:9.0px;background:#fff;border:1px solid #000"></div>
<div style="left:59.9px;top:678.0px;width:5.0px;height:1.0px;background:#000"></div>
<div style="left:57.9px;top:878.0px;width:9.0px;height:9.0px;background:#fff;border:1px solid #000"></div>
<div style="left:59.9px;top:882.0px;width:5.0px;height:1.0px;background:#000"></div>
<div class="code" style="left:69px;top:110px;width:556px;height:858px"><div><i class="p">&lt;?php</i></div><div><i class="c">// ESTA ES LA PAGINA DONDE SE PONE TODO EL CODIGO. THIS IS THE SITE WHERE ALL THE CODE GOES.</i></div><div><i class="c">// AGREGUE LA PAGINA fwx/System.php.  ADD PAGE fwx/System.php</i></div><div><i class="k">include</i> <i class="q">"</i><i class="s">fwx/System.php</i><i class="q">"</i>;</div><div></div><div><i class="c">// PAGINA DE SCRIPTS DEL USUARIO.</i></div><div><i class="k">function</i> PageLoad(){</div><div>  <i class="c">//ESTA FUNCION SE EJECUTA AL INICIAR LA CARGA DE TU PAGINA.</i></div><div></div><div>  <i class="c">//EJEMPLO CAMBIAN UN ESTILO DESDE EL MOMENTO DE LA CARGA.</i></div><div>  Css(<i class="q">"</i><i class="s">txtRes</i><i class="q">"</i>,<i class="q">"</i><i class="s">background</i><i class="q">"</i>,<i class="q">"</i><i class="s">'blue'</i><i class="q">"</i>);</div><div>  Let(<i class="q">"</i><i class="s">txtNum1</i><i class="q">"</i>,<i class="q">"</i><i class="s">130</i><i class="q">"</i>);  <i class="c">//INICIALIZANDO UN CAMPO CON UN VALOR DADO.</i></div><div></div><div>  <i class="c">//CARGA EL COMBO DE ESTADOS.</i></div><div>  ComboClear(<i class="q">"</i><i class="s">cboEstado</i><i class="q">"</i>);</div><div>  ComboAdd(<i class="q">"</i><i class="s">cboEstado</i><i class="q">"</i>,<i class="q">"</i><i class="s">DF</i><i class="q">"</i>,<i class="q">"</i><i class="s">Distrito Federal</i><i class="q">"</i>);</div><div>  ComboAdd(<i class="q">"</i><i class="s">cboEstado</i><i class="q">"</i>,<i class="q">"</i><i class="s">HGO</i><i class="q">"</i>,<i class="q">"</i><i class="s">Hidalgo</i><i class="q">"</i>);</div><div>  ComboAdd(<i class="q">"</i><i class="s">cboEstado</i><i class="q">"</i>,<i class="q">"</i><i class="s">VER</i><i class="q">"</i>,<i class="q">"</i><i class="s">Veracruz</i><i class="q">"</i>);</div><div></div><div></div><div>}</div><div></div><div><i class="k">function</i> cmdAceptar_Click(){</div><div></div><div>  <i class="c">//OBTIENE EL CAMPO DEL FORMULARIO DE DATOS</i></div><div>  <i class="v">$LsNombre</i> = Get(<i class="q">"</i><i class="s">txtNombre</i><i class="q">"</i>);</div><div>  <i class="v">$LsApellidos</i> = Get(<i class="q">"</i><i class="s">txtApellidos</i><i class="q">"</i>);</div><div></div><div>  <i class="c">//ASIGNA AL CAMPO txtSaludo EL RESULTADO DE CONCATENAR EL NOMBRE Y APELLIDOS</i></div><div>  Let(<i class="q">"</i><i class="s">txtSaludo</i><i class="q">"</i>, <i class="q">"</i><i class="s">Hola </i><i class="q">"</i>.<i class="v">$LsNombre</i>.<i class="q">"</i><i class="s"> </i><i class="q">"</i>.<i class="v">$LsApellidos</i>);</div><div></div><div>}</div><div></div><div><i class="k">function</i> sumar(){</div><div></div><div>  <i class="c">//OBTIENE LOS CAMPOS DE NUMERO DESDE EL FORMULARIO DE DATOS.</i></div><div>  <i class="v">$LiNum1</i> = Get(<i class="q">"</i><i class="s">txtNum1</i><i class="q">"</i>);</div><div>  <i class="v">$LiNum2</i> = Get(<i class="q">"</i><i class="s">txtNum2</i><i class="q">"</i>);</div><div></div><div>  <i class="c">//ASIGNA LA SUMA DE LOS NUMEROS AL CAMPO txtRes</i></div><div>  Let(<i class="q">"</i><i class="s">txtRes</i><i class="q">"</i>, <i class="v">$LiNum1</i> + <i class="v">$LiNum2</i>);</div><div>  <i class="c">//CAMBIA EL ESTILO DEL CAMPO txtRes A UN FONDO AMARILLO.</i></div><div>  Css(<i class="q">"</i><i class="s">txtRes</i><i class="q">"</i>,<i class="q">"</i><i class="s">background</i><i class="q">"</i>,<i class="q">"</i><i class="s">'yellow'</i><i class="q">"</i>);</div><div>}</div><div></div><div><i class="k">function</i> multiplica(){</div><div></div><div>  <i class="c">//OBTIENE LOS CAMPOS DE NUMERO DESDE EL FORMULARIO DE DATOS.</i></div><div>  <i class="v">$LiNum1</i> = Get(<i class="q">"</i><i class="s">txtNum1</i><i class="q">"</i>);</div><div>  <i class="v">$LiNum2</i> = Get(<i class="q">"</i><i class="s">txtNum2</i><i class="q">"</i>);</div><div></div></div>
<svg style="left:626.0px;top:111px" width="13" height="8" viewBox="-6.5 -4 13 8"><path d="M-3.5,1.8 L0,-1.8 L3.5,1.8" fill="none" stroke="#b9bec8" stroke-width="1.3"/></svg>
<div style="left:626.5px;top:122.0px;width:13.0px;height:822.0px;background:linear-gradient(90deg,#7eaee6,#8cb8ea);border:1px solid #6897d4;border-radius:3.5px"></div>
<div style="left:626.5px;top:122.0px;width:13.0px;height:398.0px;background:linear-gradient(90deg,#d3e4f8,#b4d0f2 50%,#a6c6ee);border:1px solid #6b95cf;border-radius:3.5px;box-shadow:inset 0 0 0 1px rgba(255,255,255,.75)"></div>
<svg style="left:626.5px;top:945px" width="13" height="8" viewBox="-6.5 -4 13 8"><path d="M-3.5,1.8 L0,-1.8 L3.5,1.8" fill="none" stroke="#b9bec8" stroke-width="1.3"/></svg>
<svg style="left:626.5px;top:958px" width="13" height="8" viewBox="-6.5 -4 13 8"><path d="M-3.5,-1.8 L0,1.8 L3.5,-1.8" fill="none" stroke="#33363c" stroke-width="1.4"/></svg>
<svg style="left:10px;top:969px" width="9" height="13" viewBox="-4.5 -6.5 9 13"><path d="M1.8,-3.8 L-1.8,0 L1.8,3.8" fill="none" stroke="#b9bec8" stroke-width="1.3"/></svg>
<div style="left:22.0px;top:969.0px;width:580.0px;height:12.5px;background:linear-gradient(#7eaee6,#8cb8ea);border:1px solid #6897d4;border-radius:3.5px"></div>
<div style="left:22.0px;top:969.0px;width:157.0px;height:12.5px;background:linear-gradient(#d3e4f8,#b4d0f2 50%,#a6c6ee);border:1px solid #6b95cf;border-radius:3.5px;box-shadow:inset 0 0 0 1px rgba(255,255,255,.75)"></div>
<svg style="left:604.5px;top:969px" width="9" height="13" viewBox="-4.5 -6.5 9 13"><path d="M1.8,-3.8 L-1.8,0 L1.8,3.8" fill="none" stroke="#b9bec8" stroke-width="1.3"/></svg>
<svg style="left:616.0px;top:969px" width="9" height="13" viewBox="-4.5 -6.5 9 13"><path d="M-1.8,-3.8 L1.8,0 L-1.8,3.8" fill="none" stroke="#33363c" stroke-width="1.5"/></svg>
<div style="left:157.0px;top:988.5px;width:7.0px;height:1.2px;background:radial-gradient(circle,#9aa6ba .6px,transparent .8px) 0 0/2.4px 1.2px"></div>
<div style="left:472.0px;top:988.5px;width:7.0px;height:1.2px;background:radial-gradient(circle,#9aa6ba .6px,transparent .8px) 0 0/2.4px 1.2px"></div>
<span class="t" style="left:3.5px;top:993.2px;font-size:12.00px;line-height:16px;color:#1c1c1c;letter-spacing:0.047px;">línea: 2 / 103</span>
<span class="t" style="left:102.3px;top:993.2px;font-size:12.00px;line-height:16px;color:#1c1c1c;letter-spacing:0.141px;">col: 20</span>
<span class="t" style="left:150.3px;top:993.2px;font-size:12.00px;line-height:16px;color:#1c1c1c;letter-spacing:-0.116px;">sel: 0</span>
<span class="t" style="left:198.0px;top:993.2px;font-size:12.00px;line-height:16px;color:#1c1c1c;letter-spacing:-0.852px;">INS</span>
<span class="t" style="left:234.0px;top:993.2px;font-size:12.00px;line-height:16px;color:#1c1c1c;letter-spacing:-1.074px;">TAB</span>
<span class="t" style="left:273.2px;top:993.2px;font-size:12.00px;line-height:16px;color:#1c1c1c;letter-spacing:-0.123px;">mode: Unix (LF)</span>
<span class="t" style="left:376.5px;top:993.2px;font-size:12.00px;line-height:16px;color:#1c1c1c;letter-spacing:0.196px;">codificación: UTF-8</span>
<span class="t" style="left:502.0px;top:993.2px;font-size:12.00px;line-height:16px;color:#1c1c1c;letter-spacing:0.085px;">tipo de archivo: PHP</span>
<span class="t" style="left:631.7px;top:993.2px;font-size:12.00px;line-height:16px;color:#1c1c1c;letter-spacing:-0.351px;">...</span>
</div>
<div style="left:447.8px;top:603.0px;width:3.0px;height:411.0px;background:linear-gradient(90deg,rgba(170,182,205,0) 0,rgba(150,163,190,.9) 1.2px,#909db8 2.2px,#8d9ab6 3px)"></div><div style="left:447.8px;top:0.0px;width:3.0px;height:606.0px;background:linear-gradient(90deg,rgba(200,232,248,0) 0,rgba(160,216,243,.9) 1.2px,#7ac6ed 2.2px,#74c3ec 3px);-webkit-mask-image:linear-gradient(#000 0,#000 594px,transparent 606px);mask-image:linear-gradient(#000 0,#000 594px,transparent 606px)"></div>
<div style="left:0;top:1031.5px;width:1920px;height:48.5px;background:linear-gradient(#bdada1 0,#97877d 1.5px,#8f7f75 25%,#82726a 60%,#73635b 100%)">
<div style="left:2.0px;top:3.5px;width:43.0px;height:42.5px;background:linear-gradient(#4a86e0,#2458c0 60%,#1e4aa8);border-radius:7px;box-shadow:inset 0 0 0 1.5px rgba(20,50,130,.7),inset 0 2px 2px rgba(255,255,255,.35)"></div>
<svg style="left:2px;top:3.5px" width="43" height="43" viewBox="0 0 43 43">
<defs><radialGradient id="kg" cx=".5" cy=".55" r=".6"><stop offset="0" stop-color="#5a98ee"/><stop offset="1" stop-color="#2558c2" stop-opacity="0"/></radialGradient></defs>
<rect x="2" y="2" width="39" height="39" rx="6" fill="url(#kg)"/>
<g transform="translate(20,23.4)" fill="#fff" stroke="none">
<path d="M8.47,1.49 A8.6,8.6 0 1 1 -2.23,-8.31" fill="none" stroke="#fff" stroke-width="3.3"/>
<rect x="-13.8" y="-2.3" width="5" height="4.6"/>
<rect x="-13.8" y="-2.3" width="5" height="4.6" transform="rotate(45)"/>
<rect x="-13.8" y="-2.3" width="5" height="4.6" transform="rotate(-45)"/>
<rect x="-13.8" y="-2.3" width="5" height="4.6" transform="rotate(-90)"/>
<rect x="-13.8" y="-2.3" width="5" height="4.6" transform="rotate(-135)"/>
</g>
<path d="M18 6 L22.6 6 L22.6 14.6 L29.6 6.4 L34.6 6.8 L25.8 17 L35.2 26.2 L30 26.8 L22.6 19.4 L22.6 27.4 L18 27.4 Z" fill="#fff" stroke="#2f66cc" stroke-width="1.1" stroke-linejoin="round"/></svg>
<div style="left:59.4px;top:23.5px;width:7.2px;height:7.2px;border-radius:50%;background:radial-gradient(circle at 40% 35%,#fff8 0,#e23a3a 55%)"></div>
<div style="left:67.9px;top:23.5px;width:7.2px;height:7.2px;border-radius:50%;background:radial-gradient(circle at 40% 35%,#fff8 0,#3a72e2 55%)"></div>
<div style="left:76.4px;top:23.5px;width:7.2px;height:7.2px;border-radius:50%;background:radial-gradient(circle at 40% 35%,#fff8 0,#5ab83a 55%)"></div>
<div style="left:99.0px;top:8.0px;width:30.0px;height:16.0px;border:1px solid rgba(200,190,184,.55);border-radius:2px;background:linear-gradient(rgba(160,148,140,.55),rgba(120,108,100,.5))"></div>
<div style="left:99.0px;top:27.0px;width:30.0px;height:16.0px;border:1px solid rgba(200,190,184,.55);border-radius:2px;background:linear-gradient(rgba(160,148,140,.55),rgba(120,108,100,.5))"></div>
<div style="left:132.5px;top:8.0px;width:30.0px;height:16.0px;border:1px solid rgba(200,190,184,.55);border-radius:2px;background:linear-gradient(rgba(160,148,140,.55),rgba(120,108,100,.5))"></div>
<div style="left:132.5px;top:27.0px;width:30.0px;height:16.0px;border:1px solid rgba(200,190,184,.55);border-radius:2px;background:linear-gradient(rgba(160,148,140,.55),rgba(120,108,100,.5))"></div>
<div style="left:100.0px;top:28.0px;width:26.0px;height:14.0px;background:linear-gradient(#b8aca4,#8e827a);border-radius:5px 5px 1px 1px;border:1px solid #c8beb6"></div>
<div style="left:172.0px;top:12.5px;width:40.0px;height:28.0px;background:linear-gradient(160deg,#2a66b4 0,#1d4f96 45%,#163f7c 100%);border-radius:1px"></div>
<div style="left:172.0px;top:12.5px;width:40.0px;height:28.0px;background:linear-gradient(165deg,transparent 48%,rgba(120,170,230,.35) 50%,transparent 62%)"></div>
<div style="left:172.0px;top:38.0px;width:40.0px;height:2.5px;background:#0a0f18"></div>
<div style="left:174.5px;top:16.0px;width:2.5px;height:2.5px;background:#cfe0f4;border-radius:50%"></div>
<div style="left:174.5px;top:21.0px;width:2.5px;height:2.5px;background:#cfe0f4;border-radius:50%"></div>
<div style="left:222.5px;top:6.0px;width:37.0px;height:10.0px;background:linear-gradient(#efefef,#c8c8c4);border-radius:8px 8px 0 0;border:1px solid #a8a8a4"></div>
<div style="left:223.5px;top:14.5px;width:35.5px;height:31.0px;background:linear-gradient(#9ccbf4,#4f9ae2 55%,#3c84d2);border:1.5px solid #e9f0f8;border-radius:1px;box-shadow:0 0 0 .8px #7d8a98"></div>
<div style="left:225.0px;top:29.0px;width:32.5px;height:1.6px;background:#e9f0f8"></div>
<div style="left:236.0px;top:17.5px;width:10.0px;height:3.5px;background:#eef4fb;border:1px solid #5a86b8;border-radius:1px"></div>
<div style="left:236.0px;top:32.5px;width:10.0px;height:3.5px;background:#eef4fb;border:1px solid #5a86b8;border-radius:1px"></div>
<div style="left:270.0px;top:6.5px;width:39.5px;height:36.5px;background:#d6d6d2;border:1px solid #8c8c88;border-radius:1.5px"></div>
<div style="left:272.0px;top:8.5px;width:35.5px;height:28.0px;background:linear-gradient(#2c3034,#1c1f22)"></div>
<svg style="left:274px;top:14.0px" width="16" height="12" viewBox="0 0 16 12"><path d="M1 1.5 L6 4.5 L1 7.5" fill="none" stroke="#f2f2f2" stroke-width="1.6"/><rect x="7" y="7.6" width="6" height="1.6" fill="#f2f2f2"/></svg>
<svg style="left:316px;top:2.0px" width="46" height="46" viewBox="-23 -23 46 46">
<defs><radialGradient id="fo" cx=".78" cy=".3" r=".95"><stop offset="0" stop-color="#fbd23a"/><stop offset=".35" stop-color="#f59a1e"/><stop offset=".7" stop-color="#e85d18"/><stop offset="1" stop-color="#c8400e"/></radialGradient>
<radialGradient id="fg" cx=".55" cy=".35" r=".7"><stop offset="0" stop-color="#8fdcfa"/><stop offset=".45" stop-color="#2c86d8"/><stop offset="1" stop-color="#15357e"/></radialGradient></defs>
<circle cx="0" cy="0.5" r="21" fill="url(#fo)"/>
<circle cx="2" cy="-5" r="14.6" fill="url(#fg)"/>
<path d="M-17.5,-13 C-14,-16.5 -10.5,-13 -9.5,-9.5 C-6,-12.5 -2,-10 -3.5,-6.5 C-0.5,-6 2,-3.5 1,-0.5 C5,-0.5 9.5,2 10.5,5.5 C5,3.5 0,6 -1.5,9.5 C3.5,12.5 10,11.5 14.5,7 C12,15 3,19 -5,17 C-15,14 -22,4 -17.5,-13 Z" fill="#e8641a"/>
<path d="M-17.5,-13 C-14,-16.5 -10.5,-13 -9.5,-9.5 C-12,-6 -13,0 -10,6 C-16,2 -19,-6 -17.5,-13 Z" fill="#f0862a"/>
</svg>
<div style="left:367.5px;top:6.5px;width:1.0px;height:38.0px;background:rgba(60,48,42,.45);border-right:1px solid rgba(190,180,172,.35)"></div>
<div style="left:369.0px;top:6.0px;width:193.0px;height:37.5px;background:linear-gradient(#938379,#87776d 50%,#7e6e64);border:1px solid rgba(168,154,144,.75);border-radius:3px"></div>
<div style="left:376.0px;top:14.5px;width:14.0px;height:4.0px;background:#e4e4e0;border-radius:3px 3px 0 0"></div>
<div style="left:376.5px;top:17.5px;width:13.0px;height:16.0px;background:linear-gradient(#a8d2f6,#5aa2e6);border:1px solid #e6eef6"></div>
<div style="left:377.5px;top:25.0px;width:11.0px;height:1.0px;background:#e6eef6"></div>
<span class="t" style="left:398.0px;top:17.0px;font-size:12.40px;line-height:16px;color:#c9c4c0;letter-spacing:-0.056px;">phpx – Dolphin</span>
<div style="left:562.5px;top:6.0px;width:811.0px;height:37.5px;background:linear-gradient(#a89889,#98887c 45%,#87776b);border:1px solid rgba(190,176,164,.75);border-radius:3px"></div>
<div style="left:562.5px;top:6.0px;width:33.5px;height:37.5px;background:linear-gradient(#b5a598,#a29285 45%,#918174);border:1px solid rgba(206,193,181,.7);border-radius:3px"></div>
<div style="left:757.5px;top:6.0px;width:33.5px;height:37.5px;background:linear-gradient(#b5a598,#a29285 45%,#918174);border:1px solid rgba(206,193,181,.7);border-radius:3px"></div>
<div style="left:952.5px;top:6.0px;width:33.5px;height:37.5px;background:linear-gradient(#b5a598,#a29285 45%,#918174);border:1px solid rgba(206,193,181,.7);border-radius:3px"></div>
<div style="left:1146.5px;top:6.0px;width:33.5px;height:37.5px;background:linear-gradient(#b5a598,#a29285 45%,#918174);border:1px solid rgba(206,193,181,.7);border-radius:3px"></div>
<div style="left:593.5px;top:16.3px;width:164.0px;height:18px;overflow:hidden"><span class="t" style="left:0.0px;top:1.0px;font-size:12.20px;line-height:16px;color:#1f1c1a;letter-spacing:0px;">index.ps.php - /home/ricardo/webdir/phpx - Geany (instancia nueva)</span></div>
<div style="left:787.5px;top:16.3px;width:165.0px;height:18px;overflow:hidden"><span class="t" style="left:0.0px;top:1.0px;font-size:12.20px;line-height:16px;color:#1f1c1a;letter-spacing:0px;">index.php - /home/ricardo/webdir/phpx - Geany</span></div>
<div style="left:981.0px;top:16.3px;width:165.0px;height:18px;overflow:hidden"><span class="t" style="left:0.0px;top:1.0px;font-size:12.20px;line-height:16px;color:#1f1c1a;letter-spacing:0px;">localhost/phpx/ - Google Chrome</span></div>
<div style="left:1176.5px;top:16.3px;width:150.0px;height:18px;overflow:hidden"><span class="t" style="left:0.0px;top:1.0px;font-size:12.20px;line-height:16px;color:#1f1c1a;letter-spacing:0px;">phpx : bash</span></div>
<svg style="left:566.5px;top:13.0px" width="24" height="24" viewBox="0 0 24 24">
<path d="M3.6 1.6 Q6 3.4 4.2 6 Q3 8 5.2 9.8" fill="none" stroke="#fdfdfd" stroke-width="2.2" stroke-linecap="round"/>
<ellipse cx="19" cy="12.4" rx="3.1" ry="4.8" fill="none" stroke="#d6cf1c" stroke-width="1.8"/>
<ellipse cx="10.6" cy="20.4" rx="5.8" ry="2" fill="#d9d21e" stroke="#a8a012" stroke-width=".6"/>
<ellipse cx="10.6" cy="13.2" rx="7.8" ry="6.6" fill="#ece52c" stroke="#b0a814" stroke-width=".8"/>
<ellipse cx="10.6" cy="8" rx="4.4" ry="1.7" fill="#f6f27a" stroke="#b0a814" stroke-width=".5"/>
<path d="M6.2 11.2 L7.6 13.6 L6.2 16 L4.8 13.6 Z M10.6 12 L12.2 14.6 L10.6 17.2 L9 14.6 Z M15 11.2 L16.4 13.6 L15 16 L13.6 13.6 Z" fill="#dd7a16"/>
</svg>
<svg style="left:761.5px;top:13.0px" width="24" height="24" viewBox="0 0 24 24">
<path d="M3.6 1.6 Q6 3.4 4.2 6 Q3 8 5.2 9.8" fill="none" stroke="#fdfdfd" stroke-width="2.2" stroke-linecap="round"/>
<ellipse cx="19" cy="12.4" rx="3.1" ry="4.8" fill="none" stroke="#d6cf1c" stroke-width="1.8"/>
<ellipse cx="10.6" cy="20.4" rx="5.8" ry="2" fill="#d9d21e" stroke="#a8a012" stroke-width=".6"/>
<ellipse cx="10.6" cy="13.2" rx="7.8" ry="6.6" fill="#ece52c" stroke="#b0a814" stroke-width=".8"/>
<ellipse cx="10.6" cy="8" rx="4.4" ry="1.7" fill="#f6f27a" stroke="#b0a814" stroke-width=".5"/>
<path d="M6.2 11.2 L7.6 13.6 L6.2 16 L4.8 13.6 Z M10.6 12 L12.2 14.6 L10.6 17.2 L9 14.6 Z M15 11.2 L16.4 13.6 L15 16 L13.6 13.6 Z" fill="#dd7a16"/>
</svg>
<svg style="left:958px;top:13.5px" width="22" height="22" viewBox="0 0 16 16">
<circle cx="8" cy="8" r="7.4" fill="#dd4b3e"/><path d="M8 8 L1.2 5 A7.4 7.4 0 0 0 6.2 15.2 Z" fill="#3aa757"/><path d="M8 8 L6.2 15.2 A7.4 7.4 0 0 0 15.2 6 Z" fill="#f6c52b"/>
<path d="M8 8 L1.6 4.3 A7.4 7.4 0 0 1 15.2 6 Z" fill="#dd4b3e"/><circle cx="8" cy="8" r="3.5" fill="#f3f3f3"/><circle cx="8" cy="8" r="2.7" fill="#4a8af4"/></svg>
<svg style="left:1150.0px;top:15.5px" width="22" height="19" viewBox="0 0 17 15"><rect x=".5" y=".5" width="16" height="14" rx="1" fill="#d8d8d8" stroke="#6a6a6a"/><rect x="2" y="2" width="13" height="9.5" fill="#23272b"/><path d="M3.5 4 L6 5.5 L3.5 7" fill="none" stroke="#eee" stroke-width="1"/><rect x="6.5" y="6.3" width="3" height="1" fill="#eee"/></svg>
<svg style="left:1538px;top:16.5px" width="20" height="22" viewBox="-10 -11 20 22"><circle r="8.6" fill="none" stroke="rgba(190,178,170,.75)" stroke-width="1.2"/><path d="M-2.4,-2 H1 V5 M-3,5.4 H3.6" stroke="rgba(190,178,170,.85)" stroke-width="1.7" fill="none"/><circle cx="0" cy="-5.2" r="1.3" fill="rgba(190,178,170,.85)"/></svg>
<div style="left:1563.0px;top:6.5px;width:1.0px;height:38.0px;background:rgba(70,56,50,.5);border-right:1px solid rgba(180,170,162,.3)"></div>
<svg style="left:1567px;top:16.5px" width="20" height="20" viewBox="0 0 20 20"><g fill="#3d8fe0" stroke="#d8ecfc" stroke-width=".5">
<path d="M5.5 1.5 L10 4.4 L5.5 7.3 L1 4.4 Z M14.5 1.5 L19 4.4 L14.5 7.3 L10 4.4 Z M5.5 7.3 L10 10.2 L5.5 13.1 L1 10.2 Z M14.5 7.3 L19 10.2 L14.5 13.1 L10 10.2 Z M5.8 14 L10 11.3 L14.2 14 L10 16.7 Z"/></g>
<circle cx="14.5" cy="15" r="3.6" fill="#3aa83a" stroke="#e8f8e8" stroke-width=".6"/><path d="M12.8 15 L14.1 16.4 L16.3 13.6" fill="none" stroke="#fff" stroke-width="1.1"/></svg>
<div style="left:1593.5px;top:18.5px;width:20.0px;height:14.0px;background:#f2f3f5;border:1px solid #c2c6cc"></div>
<span class="t" style="left:1599.5px;top:17.5px;font-size:12.00px;line-height:16px;color:#1a50b8;font-family:'Liberation Sans',sans-serif;font-weight:bold;">2</span>
<div style="left:1592.0px;top:25.0px;width:24.0px;height:1.2px;background:#9aa0a8;transform:rotate(38deg)"></div>
<svg style="left:1621px;top:16.5px" width="18" height="20" viewBox="0 0 18 20"><path d="M9 1 Q13 3 17 3 Q17 14 9 19 Q1 14 1 3 Q5 3 9 1 Z" fill="#f2c31e" stroke="#b8900e" stroke-width=".9"/><rect x="8" y="5" width="2" height="7" fill="#3a2c06"/><rect x="8" y="13.4" width="2" height="2" fill="#3a2c06"/></svg>
<svg style="left:1649px;top:16.5px" width="18" height="20" viewBox="0 0 18 20"><path d="M3.5 1 L11.5 13 M14.5 1 L6.5 13" stroke="#e6e2de" stroke-width="2" fill="none"/><circle cx="5" cy="15.5" r="2.6" fill="none" stroke="#e6e2de" stroke-width="1.7"/><circle cx="13" cy="15.5" r="2.6" fill="none" stroke="#e6e2de" stroke-width="1.7"/></svg>
<svg style="left:1675px;top:14.5px" width="23" height="24" viewBox="0 0 23 24"><path d="M1 9 L4.5 9 L9.5 4.5 L9.5 19.5 L4.5 15 L1 15 Z" fill="#e6e2de"/><path d="M12 8.5 Q14.2 12 12 15.5 M14.8 6 Q18.4 12 14.8 18 M17.8 3.5 Q23 12 17.8 20.5" fill="none" stroke="#e6e2de" stroke-width="1.7"/></svg>
<svg style="left:1703px;top:16.5px" width="22" height="20" viewBox="0 0 22 20"><path d="M1.5 6.5 Q11 -1.5 20.5 6.5 M4.5 10 Q11 4.5 17.5 10 M7.5 13.3 Q11 10.5 14.5 13.3" fill="none" stroke="#e6e2de" stroke-width="1.9"/><circle cx="11" cy="17" r="1.9" fill="#e6e2de"/></svg>
<svg style="left:1739px;top:21.5px" width="12" height="8" viewBox="0 0 12 8"><path d="M1 7 L6 1 L11 7 Z" fill="#e6e2de"/></svg>
<div style="left:1764.5px;top:6.5px;width:29.5px;height:40.0px;background:linear-gradient(#f4f4f2,#dcdcd8);border:1px solid #8e8e8a;border-radius:2px"></div>
<div style="left:1767.5px;top:9.5px;width:23.5px;height:6.5px;background:linear-gradient(#9db8e6,#7f9fd8);border:1px solid #5a6f9c"></div>
<div style="left:1767.5px;top:19.0px;width:4.6px;height:3.8px;background:#2e3034;border-radius:.6px"></div>
<div style="left:1773.7px;top:19.0px;width:4.6px;height:3.8px;background:#2e3034;border-radius:.6px"></div>
<div style="left:1779.9px;top:19.0px;width:4.6px;height:3.8px;background:#2e3034;border-radius:.6px"></div>
<div style="left:1786.1px;top:19.0px;width:4.6px;height:3.8px;background:#2e3034;border-radius:.6px"></div>
<div style="left:1767.5px;top:24.4px;width:4.6px;height:3.8px;background:#2e3034;border-radius:.6px"></div>
<div style="left:1773.7px;top:24.4px;width:4.6px;height:3.8px;background:#2e3034;border-radius:.6px"></div>
<div style="left:1779.9px;top:24.4px;width:4.6px;height:3.8px;background:#2e3034;border-radius:.6px"></div>
<div style="left:1786.1px;top:24.4px;width:4.6px;height:3.8px;background:#2e3034;border-radius:.6px"></div>
<div style="left:1767.5px;top:29.8px;width:4.6px;height:3.8px;background:#2e3034;border-radius:.6px"></div>
<div style="left:1773.7px;top:29.8px;width:4.6px;height:3.8px;background:#2e3034;border-radius:.6px"></div>
<div style="left:1779.9px;top:29.8px;width:4.6px;height:3.8px;background:#2e3034;border-radius:.6px"></div>
<div style="left:1786.1px;top:29.8px;width:4.6px;height:3.8px;background:#2e3034;border-radius:.6px"></div>
<div style="left:1767.5px;top:35.2px;width:4.6px;height:3.8px;background:#2e3034;border-radius:.6px"></div>
<div style="left:1773.7px;top:35.2px;width:4.6px;height:3.8px;background:#2e3034;border-radius:.6px"></div>
<div style="left:1779.9px;top:35.2px;width:4.6px;height:3.8px;background:#2e3034;border-radius:.6px"></div>
<div style="left:1786.1px;top:35.2px;width:4.6px;height:3.8px;background:#2e3034;border-radius:.6px"></div>
<div style="left:1767.5px;top:40.6px;width:4.6px;height:3.8px;background:#2e3034;border-radius:.6px"></div>
<div style="left:1773.7px;top:40.6px;width:4.6px;height:3.8px;background:#2e3034;border-radius:.6px"></div>
<div style="left:1779.9px;top:40.6px;width:4.6px;height:3.8px;background:#2e3034;border-radius:.6px"></div>
<div style="left:1786.1px;top:40.6px;width:4.6px;height:3.8px;background:#2e3034;border-radius:.6px"></div>
<span class="t" style="left:1806.5px;top:3.0px;font-size:40.00px;line-height:52px;color:#d6d1cc;transform:scaleX(0.8741);transform-origin:0 0;">22:08</span>
<div style="left:1901.0px;top:5.5px;width:40.0px;height:40.0px;border-radius:50%;background:radial-gradient(circle at 40% 40%,#a09088,#6e605a);border:1.5px solid rgba(190,180,172,.6)"></div>
</div>
</body></html>
